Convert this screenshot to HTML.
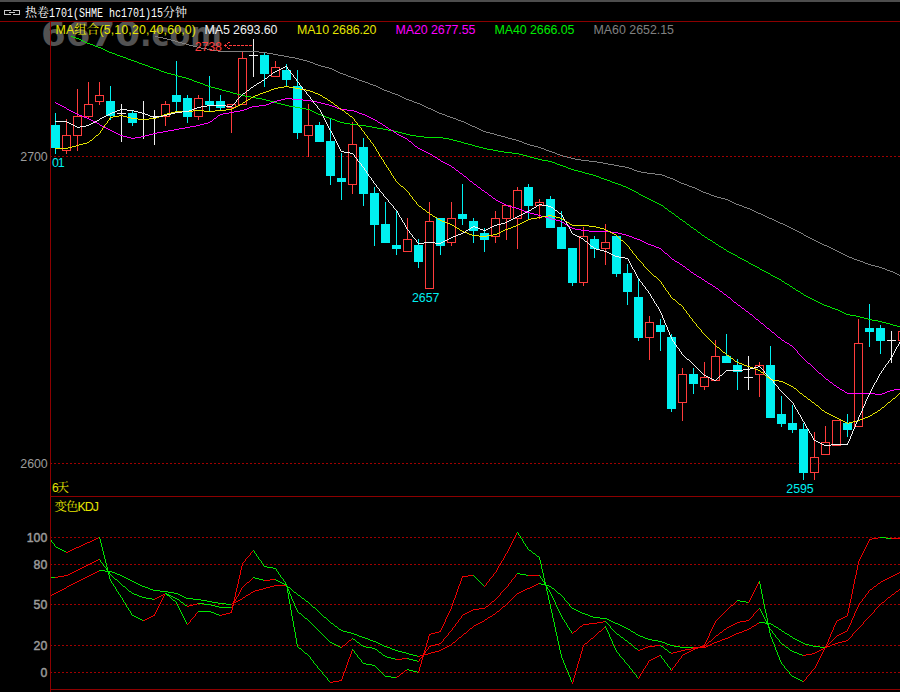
<!DOCTYPE html>
<html><head><meta charset="utf-8"><title>热卷1701</title>
<style>
html,body{margin:0;padding:0;background:#000;}
body{width:900px;height:692px;overflow:hidden;}
svg{display:block;}
text{font-family:'Liberation Sans','Noto Serif CJK SC',sans-serif;}
</style></head><body>
<svg width="900" height="692" viewBox="0 0 900 692">
<rect width="900" height="692" fill="#000"/>

<text y="46.3" font-size="34" font-weight="bold" fill="#525252" style="font-family:'DejaVu Sans','Liberation Sans',sans-serif"><tspan x="41" textLength="99" lengthAdjust="spacingAndGlyphs">6670</tspan><tspan x="140" textLength="82" lengthAdjust="spacingAndGlyphs">.com</tspan></text>
<g shape-rendering="crispEdges">
<rect x="0" y="0" width="900" height="2" fill="#4d4d4d"/>
<line x1="50" y1="156.5" x2="900" y2="156.5" stroke="#a00000" stroke-dasharray="2,2"/>
<line x1="50" y1="463.5" x2="900" y2="463.5" stroke="#a00000" stroke-dasharray="2,2"/>
<line x1="50" y1="537.5" x2="900" y2="537.5" stroke="#a00000" stroke-dasharray="2,2"/>
<line x1="50" y1="564.5" x2="900" y2="564.5" stroke="#a00000" stroke-dasharray="2,2"/>
<line x1="50" y1="604.5" x2="900" y2="604.5" stroke="#a00000" stroke-dasharray="2,2"/>
<line x1="50" y1="645.5" x2="900" y2="645.5" stroke="#a00000" stroke-dasharray="2,2"/>
<line x1="50" y1="672.5" x2="900" y2="672.5" stroke="#a00000" stroke-dasharray="2,2"/>
<rect x="0" y="21" width="900" height="1" fill="#8c0000"/>
<rect x="50" y="21" width="1" height="671" fill="#8c0000"/>
<rect x="50" y="496" width="850" height="1" fill="#8c0000"/>
<rect x="50" y="689" width="850" height="1" fill="#8c0000"/>
<rect x="55" y="113" width="1" height="41" fill="#00f0f0"/>
<rect x="51" y="125" width="9" height="23" fill="#00f0f0"/>
<rect x="66" y="119" width="1" height="17" fill="#ff3c3c"/>
<rect x="66" y="150" width="1" height="4" fill="#ff3c3c"/>
<rect x="62" y="135" width="9" height="1" fill="#ff3c3c"/>
<rect x="62" y="150" width="9" height="1" fill="#ff3c3c"/>
<rect x="62" y="135" width="1" height="16" fill="#ff3c3c"/>
<rect x="70" y="135" width="1" height="16" fill="#ff3c3c"/>
<rect x="77" y="89" width="1" height="28" fill="#ff3c3c"/>
<rect x="77" y="135" width="1" height="16" fill="#ff3c3c"/>
<rect x="73" y="116" width="9" height="1" fill="#ff3c3c"/>
<rect x="73" y="135" width="9" height="1" fill="#ff3c3c"/>
<rect x="73" y="116" width="1" height="20" fill="#ff3c3c"/>
<rect x="81" y="116" width="1" height="20" fill="#ff3c3c"/>
<rect x="88" y="82" width="1" height="23" fill="#ff3c3c"/>
<rect x="88" y="116" width="1" height="3" fill="#ff3c3c"/>
<rect x="84" y="104" width="9" height="1" fill="#ff3c3c"/>
<rect x="84" y="116" width="9" height="1" fill="#ff3c3c"/>
<rect x="84" y="104" width="1" height="13" fill="#ff3c3c"/>
<rect x="92" y="104" width="1" height="13" fill="#ff3c3c"/>
<rect x="99" y="82" width="1" height="14" fill="#ff3c3c"/>
<rect x="99" y="101" width="1" height="4" fill="#ff3c3c"/>
<rect x="95" y="95" width="9" height="1" fill="#ff3c3c"/>
<rect x="95" y="101" width="9" height="1" fill="#ff3c3c"/>
<rect x="95" y="95" width="1" height="7" fill="#ff3c3c"/>
<rect x="103" y="95" width="1" height="7" fill="#ff3c3c"/>
<rect x="110" y="86" width="1" height="34" fill="#00f0f0"/>
<rect x="106" y="101" width="9" height="15" fill="#00f0f0"/>
<rect x="121" y="104" width="1" height="38" fill="#f0f0f0"/>
<rect x="117" y="113" width="9" height="1" fill="#f0f0f0"/>
<rect x="132" y="111" width="1" height="15" fill="#00f0f0"/>
<rect x="128" y="113" width="9" height="10" fill="#00f0f0"/>
<rect x="143" y="101" width="1" height="38" fill="#f0f0f0"/>
<rect x="139" y="119" width="9" height="1" fill="#f0f0f0"/>
<rect x="154" y="110" width="1" height="35" fill="#f0f0f0"/>
<rect x="150" y="116" width="9" height="1" fill="#f0f0f0"/>
<rect x="165" y="101" width="1" height="4" fill="#ff3c3c"/>
<rect x="165" y="116" width="1" height="10" fill="#ff3c3c"/>
<rect x="161" y="104" width="9" height="1" fill="#ff3c3c"/>
<rect x="161" y="116" width="9" height="1" fill="#ff3c3c"/>
<rect x="161" y="104" width="1" height="13" fill="#ff3c3c"/>
<rect x="169" y="104" width="1" height="13" fill="#ff3c3c"/>
<rect x="176" y="61" width="1" height="52" fill="#00f0f0"/>
<rect x="172" y="95" width="9" height="7" fill="#00f0f0"/>
<rect x="187" y="95" width="1" height="28" fill="#00f0f0"/>
<rect x="183" y="98" width="9" height="19" fill="#00f0f0"/>
<rect x="198" y="95" width="1" height="4" fill="#ff3c3c"/>
<rect x="198" y="116" width="1" height="4" fill="#ff3c3c"/>
<rect x="194" y="98" width="9" height="1" fill="#ff3c3c"/>
<rect x="194" y="116" width="9" height="1" fill="#ff3c3c"/>
<rect x="194" y="98" width="1" height="19" fill="#ff3c3c"/>
<rect x="202" y="98" width="1" height="19" fill="#ff3c3c"/>
<rect x="209" y="76" width="1" height="35" fill="#00f0f0"/>
<rect x="205" y="101" width="9" height="4" fill="#00f0f0"/>
<rect x="220" y="95" width="1" height="15" fill="#00f0f0"/>
<rect x="216" y="101" width="9" height="7" fill="#00f0f0"/>
<rect x="231" y="104" width="1" height="1" fill="#ff3c3c"/>
<rect x="231" y="107" width="1" height="26" fill="#ff3c3c"/>
<rect x="227" y="104" width="9" height="1" fill="#ff3c3c"/>
<rect x="227" y="107" width="9" height="1" fill="#ff3c3c"/>
<rect x="227" y="104" width="1" height="4" fill="#ff3c3c"/>
<rect x="235" y="104" width="1" height="4" fill="#ff3c3c"/>
<rect x="242" y="52" width="1" height="7" fill="#ff3c3c"/>
<rect x="242" y="104" width="1" height="1" fill="#ff3c3c"/>
<rect x="238" y="58" width="9" height="1" fill="#ff3c3c"/>
<rect x="238" y="104" width="9" height="1" fill="#ff3c3c"/>
<rect x="238" y="58" width="1" height="47" fill="#ff3c3c"/>
<rect x="246" y="58" width="1" height="47" fill="#ff3c3c"/>
<rect x="253" y="39" width="1" height="38" fill="#f0f0f0"/>
<rect x="249" y="55" width="9" height="1" fill="#f0f0f0"/>
<rect x="264" y="53" width="1" height="34" fill="#00f0f0"/>
<rect x="260" y="55" width="9" height="19" fill="#00f0f0"/>
<rect x="275" y="61" width="1" height="7" fill="#ff3c3c"/>
<rect x="275" y="76" width="1" height="1" fill="#ff3c3c"/>
<rect x="271" y="67" width="9" height="1" fill="#ff3c3c"/>
<rect x="271" y="76" width="9" height="1" fill="#ff3c3c"/>
<rect x="271" y="67" width="1" height="10" fill="#ff3c3c"/>
<rect x="279" y="67" width="1" height="10" fill="#ff3c3c"/>
<rect x="286" y="64" width="1" height="22" fill="#00f0f0"/>
<rect x="282" y="70" width="9" height="10" fill="#00f0f0"/>
<rect x="297" y="70" width="1" height="69" fill="#00f0f0"/>
<rect x="293" y="86" width="9" height="47" fill="#00f0f0"/>
<rect x="308" y="104" width="1" height="22" fill="#ff3c3c"/>
<rect x="308" y="135" width="1" height="22" fill="#ff3c3c"/>
<rect x="304" y="125" width="9" height="1" fill="#ff3c3c"/>
<rect x="304" y="135" width="9" height="1" fill="#ff3c3c"/>
<rect x="304" y="125" width="1" height="11" fill="#ff3c3c"/>
<rect x="312" y="125" width="1" height="11" fill="#ff3c3c"/>
<rect x="319" y="122" width="1" height="20" fill="#00f0f0"/>
<rect x="315" y="125" width="9" height="17" fill="#00f0f0"/>
<rect x="330" y="119" width="1" height="66" fill="#00f0f0"/>
<rect x="326" y="141" width="9" height="35" fill="#00f0f0"/>
<rect x="341" y="153" width="1" height="47" fill="#00f0f0"/>
<rect x="337" y="178" width="9" height="4" fill="#00f0f0"/>
<rect x="352" y="122" width="1" height="23" fill="#ff3c3c"/>
<rect x="352" y="184" width="1" height="10" fill="#ff3c3c"/>
<rect x="348" y="144" width="9" height="1" fill="#ff3c3c"/>
<rect x="348" y="184" width="9" height="1" fill="#ff3c3c"/>
<rect x="348" y="144" width="1" height="41" fill="#ff3c3c"/>
<rect x="356" y="144" width="1" height="41" fill="#ff3c3c"/>
<rect x="363" y="138" width="1" height="68" fill="#00f0f0"/>
<rect x="359" y="147" width="9" height="47" fill="#00f0f0"/>
<rect x="374" y="187" width="1" height="59" fill="#00f0f0"/>
<rect x="370" y="193" width="9" height="32" fill="#00f0f0"/>
<rect x="385" y="202" width="1" height="41" fill="#00f0f0"/>
<rect x="381" y="224" width="9" height="19" fill="#00f0f0"/>
<rect x="396" y="211" width="1" height="44" fill="#00f0f0"/>
<rect x="392" y="245" width="9" height="4" fill="#00f0f0"/>
<rect x="407" y="218" width="1" height="22" fill="#ff3c3c"/>
<rect x="407" y="251" width="1" height="1" fill="#ff3c3c"/>
<rect x="403" y="239" width="9" height="1" fill="#ff3c3c"/>
<rect x="403" y="251" width="9" height="1" fill="#ff3c3c"/>
<rect x="403" y="239" width="1" height="13" fill="#ff3c3c"/>
<rect x="411" y="239" width="1" height="13" fill="#ff3c3c"/>
<rect x="418" y="239" width="1" height="29" fill="#00f0f0"/>
<rect x="414" y="245" width="9" height="17" fill="#00f0f0"/>
<rect x="429" y="202" width="1" height="20" fill="#ff3c3c"/>
<rect x="429" y="288" width="1" height="1" fill="#ff3c3c"/>
<rect x="425" y="221" width="9" height="1" fill="#ff3c3c"/>
<rect x="425" y="288" width="9" height="1" fill="#ff3c3c"/>
<rect x="425" y="221" width="1" height="68" fill="#ff3c3c"/>
<rect x="433" y="221" width="1" height="68" fill="#ff3c3c"/>
<rect x="440" y="218" width="1" height="37" fill="#00f0f0"/>
<rect x="436" y="218" width="9" height="28" fill="#00f0f0"/>
<rect x="451" y="202" width="1" height="17" fill="#ff3c3c"/>
<rect x="451" y="242" width="1" height="4" fill="#ff3c3c"/>
<rect x="447" y="218" width="9" height="1" fill="#ff3c3c"/>
<rect x="447" y="242" width="9" height="1" fill="#ff3c3c"/>
<rect x="447" y="218" width="1" height="25" fill="#ff3c3c"/>
<rect x="455" y="218" width="1" height="25" fill="#ff3c3c"/>
<rect x="462" y="184" width="1" height="41" fill="#00f0f0"/>
<rect x="458" y="214" width="9" height="5" fill="#00f0f0"/>
<rect x="473" y="218" width="1" height="25" fill="#00f0f0"/>
<rect x="469" y="221" width="9" height="10" fill="#00f0f0"/>
<rect x="484" y="228" width="1" height="24" fill="#00f0f0"/>
<rect x="480" y="233" width="9" height="7" fill="#00f0f0"/>
<rect x="495" y="211" width="1" height="8" fill="#ff3c3c"/>
<rect x="495" y="236" width="1" height="7" fill="#ff3c3c"/>
<rect x="491" y="218" width="9" height="1" fill="#ff3c3c"/>
<rect x="491" y="236" width="9" height="1" fill="#ff3c3c"/>
<rect x="491" y="218" width="1" height="19" fill="#ff3c3c"/>
<rect x="499" y="218" width="1" height="19" fill="#ff3c3c"/>
<rect x="506" y="205" width="1" height="1" fill="#ff3c3c"/>
<rect x="506" y="218" width="1" height="22" fill="#ff3c3c"/>
<rect x="502" y="205" width="9" height="1" fill="#ff3c3c"/>
<rect x="502" y="218" width="9" height="1" fill="#ff3c3c"/>
<rect x="502" y="205" width="1" height="14" fill="#ff3c3c"/>
<rect x="510" y="205" width="1" height="14" fill="#ff3c3c"/>
<rect x="517" y="187" width="1" height="4" fill="#ff3c3c"/>
<rect x="517" y="218" width="1" height="31" fill="#ff3c3c"/>
<rect x="513" y="190" width="9" height="1" fill="#ff3c3c"/>
<rect x="513" y="218" width="9" height="1" fill="#ff3c3c"/>
<rect x="513" y="190" width="1" height="29" fill="#ff3c3c"/>
<rect x="521" y="190" width="1" height="29" fill="#ff3c3c"/>
<rect x="528" y="184" width="1" height="35" fill="#00f0f0"/>
<rect x="524" y="187" width="9" height="19" fill="#00f0f0"/>
<rect x="539" y="199" width="1" height="4" fill="#ff3c3c"/>
<rect x="539" y="205" width="1" height="14" fill="#ff3c3c"/>
<rect x="535" y="202" width="9" height="1" fill="#ff3c3c"/>
<rect x="535" y="205" width="9" height="1" fill="#ff3c3c"/>
<rect x="535" y="202" width="1" height="4" fill="#ff3c3c"/>
<rect x="543" y="202" width="1" height="4" fill="#ff3c3c"/>
<rect x="550" y="196" width="1" height="32" fill="#00f0f0"/>
<rect x="546" y="199" width="9" height="29" fill="#00f0f0"/>
<rect x="561" y="211" width="1" height="38" fill="#00f0f0"/>
<rect x="557" y="227" width="9" height="22" fill="#00f0f0"/>
<rect x="572" y="248" width="1" height="38" fill="#00f0f0"/>
<rect x="568" y="248" width="9" height="35" fill="#00f0f0"/>
<rect x="583" y="227" width="1" height="10" fill="#ff3c3c"/>
<rect x="583" y="282" width="1" height="4" fill="#ff3c3c"/>
<rect x="579" y="236" width="9" height="1" fill="#ff3c3c"/>
<rect x="579" y="282" width="9" height="1" fill="#ff3c3c"/>
<rect x="579" y="236" width="1" height="47" fill="#ff3c3c"/>
<rect x="587" y="236" width="1" height="47" fill="#ff3c3c"/>
<rect x="594" y="236" width="1" height="22" fill="#00f0f0"/>
<rect x="590" y="239" width="9" height="10" fill="#00f0f0"/>
<rect x="605" y="224" width="1" height="19" fill="#ff3c3c"/>
<rect x="605" y="248" width="1" height="17" fill="#ff3c3c"/>
<rect x="601" y="242" width="9" height="1" fill="#ff3c3c"/>
<rect x="601" y="248" width="9" height="1" fill="#ff3c3c"/>
<rect x="601" y="242" width="1" height="7" fill="#ff3c3c"/>
<rect x="609" y="242" width="1" height="7" fill="#ff3c3c"/>
<rect x="616" y="236" width="1" height="41" fill="#00f0f0"/>
<rect x="612" y="236" width="9" height="38" fill="#00f0f0"/>
<rect x="627" y="264" width="1" height="41" fill="#00f0f0"/>
<rect x="623" y="273" width="9" height="19" fill="#00f0f0"/>
<rect x="638" y="279" width="1" height="62" fill="#00f0f0"/>
<rect x="634" y="297" width="9" height="41" fill="#00f0f0"/>
<rect x="649" y="316" width="1" height="7" fill="#ff3c3c"/>
<rect x="649" y="337" width="1" height="23" fill="#ff3c3c"/>
<rect x="645" y="322" width="9" height="1" fill="#ff3c3c"/>
<rect x="645" y="337" width="9" height="1" fill="#ff3c3c"/>
<rect x="645" y="322" width="1" height="16" fill="#ff3c3c"/>
<rect x="653" y="322" width="1" height="16" fill="#ff3c3c"/>
<rect x="660" y="319" width="1" height="32" fill="#00f0f0"/>
<rect x="656" y="325" width="9" height="7" fill="#00f0f0"/>
<rect x="671" y="334" width="1" height="78" fill="#00f0f0"/>
<rect x="667" y="337" width="9" height="72" fill="#00f0f0"/>
<rect x="682" y="368" width="1" height="7" fill="#ff3c3c"/>
<rect x="682" y="402" width="1" height="19" fill="#ff3c3c"/>
<rect x="678" y="374" width="9" height="1" fill="#ff3c3c"/>
<rect x="678" y="402" width="9" height="1" fill="#ff3c3c"/>
<rect x="678" y="374" width="1" height="29" fill="#ff3c3c"/>
<rect x="686" y="374" width="1" height="29" fill="#ff3c3c"/>
<rect x="693" y="368" width="1" height="26" fill="#00f0f0"/>
<rect x="689" y="374" width="9" height="10" fill="#00f0f0"/>
<rect x="704" y="362" width="1" height="16" fill="#ff3c3c"/>
<rect x="704" y="386" width="1" height="4" fill="#ff3c3c"/>
<rect x="700" y="377" width="9" height="1" fill="#ff3c3c"/>
<rect x="700" y="386" width="9" height="1" fill="#ff3c3c"/>
<rect x="700" y="377" width="1" height="10" fill="#ff3c3c"/>
<rect x="708" y="377" width="1" height="10" fill="#ff3c3c"/>
<rect x="715" y="340" width="1" height="17" fill="#ff3c3c"/>
<rect x="715" y="380" width="1" height="1" fill="#ff3c3c"/>
<rect x="711" y="356" width="9" height="1" fill="#ff3c3c"/>
<rect x="711" y="380" width="9" height="1" fill="#ff3c3c"/>
<rect x="711" y="356" width="1" height="25" fill="#ff3c3c"/>
<rect x="719" y="356" width="1" height="25" fill="#ff3c3c"/>
<rect x="726" y="334" width="1" height="29" fill="#00f0f0"/>
<rect x="722" y="356" width="9" height="7" fill="#00f0f0"/>
<rect x="737" y="359" width="1" height="31" fill="#00f0f0"/>
<rect x="733" y="365" width="9" height="7" fill="#00f0f0"/>
<rect x="748" y="356" width="1" height="34" fill="#f0f0f0"/>
<rect x="744" y="377" width="9" height="1" fill="#f0f0f0"/>
<rect x="759" y="362" width="1" height="4" fill="#ff3c3c"/>
<rect x="759" y="374" width="1" height="23" fill="#ff3c3c"/>
<rect x="755" y="365" width="9" height="1" fill="#ff3c3c"/>
<rect x="755" y="374" width="9" height="1" fill="#ff3c3c"/>
<rect x="755" y="365" width="1" height="10" fill="#ff3c3c"/>
<rect x="763" y="365" width="1" height="10" fill="#ff3c3c"/>
<rect x="770" y="346" width="1" height="72" fill="#00f0f0"/>
<rect x="766" y="365" width="9" height="53" fill="#00f0f0"/>
<rect x="781" y="396" width="1" height="31" fill="#00f0f0"/>
<rect x="777" y="414" width="9" height="10" fill="#00f0f0"/>
<rect x="792" y="405" width="1" height="28" fill="#00f0f0"/>
<rect x="788" y="423" width="9" height="7" fill="#00f0f0"/>
<rect x="803" y="423" width="1" height="57" fill="#00f0f0"/>
<rect x="799" y="429" width="9" height="44" fill="#00f0f0"/>
<rect x="814" y="432" width="1" height="26" fill="#ff3c3c"/>
<rect x="814" y="472" width="1" height="8" fill="#ff3c3c"/>
<rect x="810" y="457" width="9" height="1" fill="#ff3c3c"/>
<rect x="810" y="472" width="9" height="1" fill="#ff3c3c"/>
<rect x="810" y="457" width="1" height="16" fill="#ff3c3c"/>
<rect x="818" y="457" width="1" height="16" fill="#ff3c3c"/>
<rect x="825" y="426" width="1" height="17" fill="#ff3c3c"/>
<rect x="825" y="454" width="1" height="1" fill="#ff3c3c"/>
<rect x="821" y="442" width="9" height="1" fill="#ff3c3c"/>
<rect x="821" y="454" width="9" height="1" fill="#ff3c3c"/>
<rect x="821" y="442" width="1" height="13" fill="#ff3c3c"/>
<rect x="829" y="442" width="1" height="13" fill="#ff3c3c"/>
<rect x="836" y="420" width="1" height="1" fill="#ff3c3c"/>
<rect x="836" y="445" width="1" height="1" fill="#ff3c3c"/>
<rect x="832" y="420" width="9" height="1" fill="#ff3c3c"/>
<rect x="832" y="445" width="9" height="1" fill="#ff3c3c"/>
<rect x="832" y="420" width="1" height="26" fill="#ff3c3c"/>
<rect x="840" y="420" width="1" height="26" fill="#ff3c3c"/>
<rect x="847" y="414" width="1" height="23" fill="#00f0f0"/>
<rect x="843" y="423" width="9" height="7" fill="#00f0f0"/>
<rect x="858" y="319" width="1" height="25" fill="#ff3c3c"/>
<rect x="858" y="426" width="1" height="1" fill="#ff3c3c"/>
<rect x="854" y="343" width="9" height="1" fill="#ff3c3c"/>
<rect x="854" y="426" width="9" height="1" fill="#ff3c3c"/>
<rect x="854" y="343" width="1" height="84" fill="#ff3c3c"/>
<rect x="862" y="343" width="1" height="84" fill="#ff3c3c"/>
<rect x="869" y="304" width="1" height="43" fill="#00f0f0"/>
<rect x="865" y="328" width="9" height="4" fill="#00f0f0"/>
<rect x="880" y="325" width="1" height="29" fill="#00f0f0"/>
<rect x="876" y="328" width="9" height="13" fill="#00f0f0"/>
<rect x="891" y="331" width="1" height="32" fill="#f0f0f0"/>
<rect x="887" y="340" width="9" height="1" fill="#f0f0f0"/>
<rect x="902" y="331" width="1" height="1" fill="#ff3c3c"/>
<rect x="902" y="340" width="1" height="1" fill="#ff3c3c"/>
<rect x="898" y="331" width="9" height="1" fill="#ff3c3c"/>
<rect x="898" y="340" width="9" height="1" fill="#ff3c3c"/>
<rect x="898" y="331" width="1" height="10" fill="#ff3c3c"/>
<rect x="906" y="331" width="1" height="10" fill="#ff3c3c"/>
</g>
<defs><clipPath id="cm"><rect x="51" y="36" width="849" height="460"/></clipPath><clipPath id="ck"><rect x="51" y="497" width="849" height="193"/></clipPath></defs>
<g clip-path="url(#cm)" shape-rendering="crispEdges">
<path d="M155 36.5h3M158 37.5h5M163 38.5h4M167 39.5h4M171 40.5h4M175 41.5h3M178 42.5h4M182 43.5h4M186 44.5h3M189 45.5h4M193 46.5h4M197 47.5h4M201 48.5h6M207 49.5h5M212 50.5h6M218 51.5h41M259 52.5h8M267 53.5h6M273 54.5h5M278 55.5h6M284 56.5h5M289 57.5h6M295 58.5h4M299 59.5h4M303 60.5h4M307 61.5h3M310 62.5h3M313 63.5h2M315 64.5h3M318 65.5h3M321 66.5h4M325 67.5h4M329 68.5h3M332 69.5h2M334 70.5h2M336 71.5h2M338 72.5h2M340 73.5h3M343 74.5h3M346 75.5h2M348 76.5h3M351 77.5h3M354 78.5h3M357 79.5h2M359 80.5h3M362 81.5h3M365 82.5h3M368 83.5h2M370 84.5h3M373 85.5h3M376 86.5h2M378 87.5h2M380 88.5h2M382 89.5h2M384 90.5h3M387 91.5h3M390 92.5h2M392 93.5h3M395 94.5h3M398 95.5h2M400 96.5h2M402 97.5h2M404 98.5h2M406 99.5h3M409 100.5h3M412 101.5h2M414 102.5h3M417 103.5h3M420 104.5h2M422 105.5h2M424 106.5h2M426 107.5h2M428 108.5h3M431 109.5h2M433 110.5h2M435 111.5h2M437 112.5h2M439 113.5h3M442 114.5h3M445 115.5h2M447 116.5h3M450 117.5h3M453 118.5h3M456 119.5h2M458 120.5h3M461 121.5h3M464 122.5h2M466 123.5h2M468 124.5h2M470 125.5h2M472 126.5h3M475 127.5h2M477 128.5h2M479 129.5h2M481 130.5h2M483 131.5h3M486 132.5h4M490 133.5h4M494 134.5h3M497 135.5h4M501 136.5h4M505 137.5h3M508 138.5h4M512 139.5h4M516 140.5h3M519 141.5h3M522 142.5h2M524 143.5h3M527 144.5h3M530 145.5h4M534 146.5h4M538 147.5h3M541 148.5h3M544 149.5h2M546 150.5h3M549 151.5h3M552 152.5h3M555 153.5h2M557 154.5h3M560 155.5h3M563 156.5h4M567 157.5h4M571 158.5h4M575 159.5h6M581 160.5h8M589 161.5h8M597 162.5h6M603 163.5h5M608 164.5h6M614 165.5h5M619 166.5h6M625 167.5h4M629 168.5h3M632 169.5h2M634 170.5h3M637 171.5h4M641 172.5h6M647 173.5h8M655 174.5h7M662 175.5h3M665 176.5h2M667 177.5h3M670 178.5h3M673 179.5h2M675 180.5h2M677 181.5h2M679 182.5h2M681 183.5h3M684 184.5h3M687 185.5h2M689 186.5h3M692 187.5h3M695 188.5h2M697 189.5h2M699 190.5h2M701 191.5h2M703 192.5h3M706 193.5h3M709 194.5h2M711 195.5h3M714 196.5h3M717 197.5h4M721 198.5h4M725 199.5h3M728 200.5h2M730 201.5h2M732 202.5h2M734 203.5h2M736 204.5h3M739 205.5h3M742 206.5h2M744 207.5h3M747 208.5h3M750 209.5h2M752 210.5h2M754 211.5h2M756 212.5h2M758 213.5h3M761 214.5h2M763 215.5h2M765 216.5h2M767 217.5h2M769 218.5h3M772 219.5h2M774 220.5h2M776 221.5h2M778 222.5h2M780 223.5h3M783 224.5h2M785 225.5h2M787 226.5h2M789 227.5h2M791 228.5h2M793 229.5h2M795 230.5h2M797 231.5h2M799 232.5h2M801 233.5h2M803 234.5h1M804 235.5h2M806 236.5h2M808 237.5h2M810 238.5h2M812 239.5h2M814 240.5h2M816 241.5h2M818 242.5h2M820 243.5h2M822 244.5h2M824 245.5h3M827 246.5h2M829 247.5h2M831 248.5h2M833 249.5h2M835 250.5h2M837 251.5h2M839 252.5h2M841 253.5h2M843 254.5h2M845 255.5h2M847 256.5h2M849 257.5h3M852 258.5h2M854 259.5h3M857 260.5h3M860 261.5h3M863 262.5h2M865 263.5h3M868 264.5h3M871 265.5h4M875 266.5h4M879 267.5h3M882 268.5h3M885 269.5h2M887 270.5h3M890 271.5h3M893 272.5h2M895 273.5h2M897 274.5h2M899 275.5h1" stroke="#808080" stroke-width="1" fill="none"/>
<path d="M71 36.5h2M73 37.5h3M76 38.5h3M79 39.5h2M81 40.5h2M83 41.5h2M85 42.5h2M87 43.5h3M90 44.5h3M93 45.5h2M95 46.5h3M98 47.5h3M101 48.5h2M103 49.5h2M105 50.5h2M107 51.5h2M109 52.5h3M112 53.5h3M115 54.5h2M117 55.5h3M120 56.5h3M123 57.5h3M126 58.5h2M128 59.5h3M131 60.5h3M134 61.5h3M137 62.5h2M139 63.5h3M142 64.5h3M145 65.5h3M148 66.5h2M150 67.5h3M153 68.5h3M156 69.5h3M159 70.5h2M161 71.5h3M164 72.5h3M167 73.5h4M171 74.5h4M175 75.5h3M178 76.5h4M182 77.5h4M186 78.5h3M189 79.5h3M192 80.5h2M194 81.5h3M197 82.5h3M200 83.5h3M203 84.5h2M205 85.5h3M208 86.5h3M211 87.5h4M215 88.5h4M219 89.5h3M222 90.5h4M226 91.5h4M230 92.5h3M233 93.5h4M237 94.5h4M241 95.5h4M245 96.5h6M251 97.5h5M256 98.5h6M262 99.5h4M266 100.5h4M270 101.5h4M274 102.5h3M277 103.5h4M281 104.5h4M285 105.5h4M289 106.5h6M295 107.5h5M300 108.5h6M306 109.5h4M310 110.5h2M312 111.5h2M314 112.5h2M316 113.5h2M318 114.5h3M321 115.5h3M324 116.5h2M326 117.5h3M329 118.5h3M332 119.5h3M335 120.5h2M337 121.5h3M340 122.5h4M344 123.5h6M350 124.5h8M358 125.5h8M366 126.5h6M372 127.5h5M377 128.5h6M383 129.5h5M388 130.5h6M394 131.5h4M398 132.5h4M402 133.5h4M406 134.5h4M410 135.5h6M416 136.5h8M424 137.5h19M443 138.5h6M449 139.5h4M453 140.5h4M457 141.5h4M461 142.5h3M464 143.5h4M468 144.5h4M472 145.5h3M475 146.5h4M479 147.5h4M483 148.5h4M487 149.5h6M493 150.5h5M498 151.5h6M504 152.5h8M512 153.5h7M519 154.5h4M523 155.5h4M527 156.5h3M530 157.5h4M534 158.5h4M538 159.5h4M542 160.5h6M548 161.5h4M552 162.5h3M555 163.5h2M557 164.5h3M560 165.5h3M563 166.5h3M566 167.5h2M568 168.5h3M571 169.5h3M574 170.5h4M578 171.5h4M582 172.5h3M585 173.5h4M589 174.5h4M593 175.5h3M596 176.5h3M599 177.5h2M601 178.5h3M604 179.5h3M607 180.5h3M610 181.5h2M612 182.5h3M615 183.5h3M618 184.5h3M621 185.5h2M623 186.5h3M626 187.5h2M628 188.5h2M630 189.5h2M632 190.5h2M634 191.5h2M636 192.5h2M638 193.5h1M639 194.5h2M641 195.5h2M643 196.5h2M645 197.5h2M647 198.5h2M649 199.5h2M651 200.5h2M653 201.5h2M655 202.5h2M657 203.5h2M659 204.5h2M661 205.5h2M663 206.5h1M664 207.5h1M665 208.5h2M667 209.5h1M668 210.5h1M669 211.5h2M671 212.5h1M672 213.5h2M674 214.5h1M675 215.5h1M676 216.5h2M678 217.5h1M679 218.5h1M680 219.5h2M682 220.5h1M683 221.5h2M685 222.5h1M686 223.5h1M687 224.5h2M689 225.5h1M690 226.5h1M691 227.5h2M693 228.5h1M694 229.5h2M696 230.5h1M697 231.5h1M698 232.5h2M700 233.5h1M701 234.5h1M702 235.5h2M704 236.5h1M705 237.5h2M707 238.5h1M708 239.5h2M710 240.5h2M712 241.5h1M713 242.5h2M715 243.5h1M716 244.5h2M718 245.5h1M719 246.5h2M721 247.5h2M723 248.5h1M724 249.5h2M726 250.5h1M727 251.5h2M729 252.5h2M731 253.5h2M733 254.5h2M735 255.5h2M737 256.5h1M738 257.5h2M740 258.5h2M742 259.5h2M744 260.5h2M746 261.5h2M748 262.5h1M749 263.5h2M751 264.5h2M753 265.5h2M755 266.5h2M757 267.5h2M759 268.5h1M760 269.5h2M762 270.5h2M764 271.5h2M766 272.5h2M768 273.5h2M770 274.5h1M771 275.5h2M773 276.5h2M775 277.5h2M777 278.5h2M779 279.5h2M781 280.5h1M782 281.5h2M784 282.5h1M785 283.5h2M787 284.5h2M789 285.5h1M790 286.5h2M792 287.5h1M793 288.5h2M795 289.5h1M796 290.5h2M798 291.5h2M800 292.5h1M801 293.5h2M803 294.5h1M804 295.5h2M806 296.5h2M808 297.5h2M810 298.5h2M812 299.5h2M814 300.5h2M816 301.5h2M818 302.5h2M820 303.5h2M822 304.5h2M824 305.5h3M827 306.5h3M830 307.5h2M832 308.5h3M835 309.5h3M838 310.5h2M840 311.5h2M842 312.5h2M844 313.5h2M846 314.5h4M850 315.5h6M856 316.5h4M860 317.5h4M864 318.5h4M868 319.5h4M872 320.5h6M878 321.5h4M882 322.5h4M886 323.5h4M890 324.5h3M893 325.5h4M897 326.5h3" stroke="#00e600" stroke-width="1" fill="none"/>
<path d="M285 98.5h7M281 99.5h4M292 99.5h11M277 100.5h4M303 100.5h8M274 101.5h3M311 101.5h6M55 102.5h1M271 102.5h3M317 102.5h4M56 103.5h2M269 103.5h2M321 103.5h4M58 104.5h2M266 104.5h3M325 104.5h4M60 105.5h2M259 105.5h7M329 105.5h3M62 106.5h2M252 106.5h7M332 106.5h3M64 107.5h2M249 107.5h3M335 107.5h2M66 108.5h1M247 108.5h2M337 108.5h3M67 109.5h2M244 109.5h3M340 109.5h7M69 110.5h2M240 110.5h4M347 110.5h7M71 111.5h2M234 111.5h6M354 111.5h3M73 112.5h2M229 112.5h5M357 112.5h2M75 113.5h2M223 113.5h6M359 113.5h3M77 114.5h2M220 114.5h3M362 114.5h3M79 115.5h3M218 115.5h2M365 115.5h2M82 116.5h2M217 116.5h1M367 116.5h2M84 117.5h3M216 117.5h1M369 117.5h2M87 118.5h2M214 118.5h2M371 118.5h2M89 119.5h2M213 119.5h1M373 119.5h2M91 120.5h2M212 120.5h1M375 120.5h2M93 121.5h2M210 121.5h2M377 121.5h1M95 122.5h2M208 122.5h2M378 122.5h2M97 123.5h2M204 123.5h4M380 123.5h2M99 124.5h1M200 124.5h4M382 124.5h1M100 125.5h2M196 125.5h4M383 125.5h2M102 126.5h2M190 126.5h6M385 126.5h1M104 127.5h2M185 127.5h5M386 127.5h2M106 128.5h2M179 128.5h6M388 128.5h1M108 129.5h2M174 129.5h5M389 129.5h2M110 130.5h2M168 130.5h6M391 130.5h2M112 131.5h2M163 131.5h5M393 131.5h1M114 132.5h2M157 132.5h6M394 132.5h2M116 133.5h2M153 133.5h4M396 133.5h1M118 134.5h2M149 134.5h4M397 134.5h2M120 135.5h3M145 135.5h4M399 135.5h2M123 136.5h4M141 136.5h4M401 136.5h2M127 137.5h4M135 137.5h6M403 137.5h2M131 138.5h4M405 138.5h2M407 139.5h1M408 140.5h1M409 141.5h2M411 142.5h1M412 143.5h1M413 144.5h1M414 145.5h1M415 146.5h2M417 147.5h1M418 148.5h2M420 149.5h2M422 150.5h2M424 151.5h2M426 152.5h2M428 153.5h2M430 154.5h2M432 155.5h1M433 156.5h2M435 157.5h2M437 158.5h1M438 159.5h2M440 160.5h1M441 161.5h2M443 162.5h2M445 163.5h2M447 164.5h2M449 165.5h2M451 166.5h1M452 167.5h2M454 168.5h1M455 169.5h1M456 170.5h2M458 171.5h1M459 172.5h1M460 173.5h2M462 174.5h1M463 175.5h1M464 176.5h2M466 177.5h1M467 178.5h1M468 179.5h1M469 180.5h1M470 181.5h2M472 182.5h1M473 183.5h1M474 184.5h2M476 185.5h1M477 186.5h1M478 187.5h2M480 188.5h1M481 189.5h1M482 190.5h2M484 191.5h1M485 192.5h2M487 193.5h1M488 194.5h1M489 195.5h2M491 196.5h1M492 197.5h1M493 198.5h2M495 199.5h1M496 200.5h2M498 201.5h2M500 202.5h2M502 203.5h2M504 204.5h2M506 205.5h2M508 206.5h4M512 207.5h4M516 208.5h3M519 209.5h3M522 210.5h2M524 211.5h3M527 212.5h3M530 213.5h4M534 214.5h4M538 215.5h3M541 216.5h4M545 217.5h4M549 218.5h3M552 219.5h4M556 220.5h4M560 221.5h2M562 222.5h2M564 223.5h1M565 224.5h2M567 225.5h2M569 226.5h1M570 227.5h2M572 228.5h3M575 229.5h6M581 230.5h8M589 231.5h22M611 232.5h7M618 233.5h4M622 234.5h4M626 235.5h3M629 236.5h3M632 237.5h2M634 238.5h3M637 239.5h3M640 240.5h2M642 241.5h2M644 242.5h2M646 243.5h2M648 244.5h3M651 245.5h3M654 246.5h2M656 247.5h3M659 248.5h2M661 249.5h1M662 250.5h1M663 251.5h1M664 252.5h1M665 253.5h2M667 254.5h1M668 255.5h1M669 256.5h1M670 257.5h1M671 258.5h1M672 259.5h2M674 260.5h1M675 261.5h2M677 262.5h2M679 263.5h1M680 264.5h2M682 265.5h1M683 266.5h2M685 267.5h1M686 268.5h1M687 269.5h2M689 270.5h1M690 271.5h1M691 272.5h2M693 273.5h1M694 274.5h2M696 275.5h1M697 276.5h2M699 277.5h2M701 278.5h1M702 279.5h2M704 280.5h1M705 281.5h2M707 282.5h1M708 283.5h2M710 284.5h2M712 285.5h1M713 286.5h2M715 287.5h1M716 288.5h2M718 289.5h1M719 290.5h1M720 291.5h2M722 292.5h1M723 293.5h1M724 294.5h2M726 295.5h1M727 296.5h1M728 297.5h2M730 298.5h1M731 299.5h1M732 300.5h1M733 301.5h1M734 302.5h2M736 303.5h1M737 304.5h1M738 305.5h2M740 306.5h1M741 307.5h1M742 308.5h2M744 309.5h1M745 310.5h1M746 311.5h2M748 312.5h1M749 313.5h1M750 314.5h2M752 315.5h1M753 316.5h1M754 317.5h1M755 318.5h1M756 319.5h2M758 320.5h1M759 321.5h1M760 322.5h1M761 323.5h2M763 324.5h1M764 325.5h1M765 326.5h1M766 327.5h1M767 328.5h2M769 329.5h1M770 330.5h1M771 331.5h1M772 332.5h2M774 333.5h1M775 334.5h1M776 335.5h1M777 336.5h1M778 337.5h2M780 338.5h1M781 339.5h1M782 340.5h2M784 341.5h1M785 342.5h2M787 343.5h2M789 344.5h1M790 345.5h2M792 346.5h1M793 347.5h1M794 348.5h1M795 349.5h1M796 350.5h1M797 351.5h1M797 352.5h1M798 353.5h1M799 354.5h1M800 355.5h1M801 356.5h1M802 357.5h1M803 358.5h1M804 359.5h1M805 360.5h1M806 361.5h1M807 362.5h1M808 363.5h2M810 364.5h1M811 365.5h1M812 366.5h1M813 367.5h1M814 368.5h1M815 369.5h1M816 370.5h1M817 371.5h1M818 372.5h1M819 373.5h2M821 374.5h1M822 375.5h1M823 376.5h1M824 377.5h1M825 378.5h1M826 379.5h2M828 380.5h1M829 381.5h1M830 382.5h2M832 383.5h1M833 384.5h1M834 385.5h2M836 386.5h1M837 387.5h2M839 388.5h1M840 389.5h2M894 389.5h6M842 390.5h2M890 390.5h4M844 391.5h1M887 391.5h3M845 392.5h2M885 392.5h2M847 393.5h28M882 393.5h3M875 394.5h7" stroke="#ff00ff" stroke-width="1" fill="none"/>
<path d="M284 86.5h5M278 87.5h6M289 87.5h6M274 88.5h4M295 88.5h5M271 89.5h3M300 89.5h6M269 90.5h2M306 90.5h4M266 91.5h3M310 91.5h3M263 92.5h3M313 92.5h2M260 93.5h3M315 93.5h3M258 94.5h2M318 94.5h2M255 95.5h3M320 95.5h2M253 96.5h2M322 96.5h1M251 97.5h2M323 97.5h2M250 98.5h1M325 98.5h2M248 99.5h2M327 99.5h1M246 100.5h2M328 100.5h2M245 101.5h1M330 101.5h1M243 102.5h2M331 102.5h2M242 103.5h1M333 103.5h1M240 104.5h2M334 104.5h1M238 105.5h2M335 105.5h2M236 106.5h2M337 106.5h1M234 107.5h2M338 107.5h1M232 108.5h2M339 108.5h2M226 109.5h6M341 109.5h1M193 110.5h11M215 110.5h11M342 110.5h2M175 111.5h18M204 111.5h11M344 111.5h1M171 112.5h4M345 112.5h1M167 113.5h4M346 113.5h2M164 114.5h3M348 114.5h1M119 115.5h4M161 115.5h3M349 115.5h1M113 116.5h6M123 116.5h4M159 116.5h2M350 116.5h2M110 117.5h3M127 117.5h4M156 117.5h3M352 117.5h1M109 118.5h1M131 118.5h7M149 118.5h7M353 118.5h1M109 119.5h1M138 119.5h11M354 119.5h1M108 120.5h1M354 120.5h1M107 121.5h1M355 121.5h1M107 122.5h1M356 122.5h1M106 123.5h1M357 123.5h1M105 124.5h1M357 124.5h1M104 125.5h1M358 125.5h1M104 126.5h1M359 126.5h1M103 127.5h1M360 127.5h1M102 128.5h1M361 128.5h1M102 129.5h1M361 129.5h1M101 130.5h1M362 130.5h1M100 131.5h1M363 131.5h1M100 132.5h1M364 132.5h1M99 133.5h1M364 133.5h1M98 134.5h1M365 134.5h1M96 135.5h2M366 135.5h1M95 136.5h1M367 136.5h1M94 137.5h1M367 137.5h1M93 138.5h1M368 138.5h1M92 139.5h1M369 139.5h1M90 140.5h2M370 140.5h1M89 141.5h1M370 141.5h1M87 142.5h2M371 142.5h1M83 143.5h4M372 143.5h1M79 144.5h4M373 144.5h1M76 145.5h3M373 145.5h1M72 146.5h4M374 146.5h1M68 147.5h4M375 147.5h1M55 148.5h13M375 148.5h1M376 149.5h1M376 150.5h1M377 151.5h1M378 152.5h1M378 153.5h1M379 154.5h1M379 155.5h1M380 156.5h1M381 157.5h1M381 158.5h1M382 159.5h1M383 160.5h1M383 161.5h1M384 162.5h1M384 163.5h1M385 164.5h1M386 165.5h1M386 166.5h1M387 167.5h1M388 168.5h1M388 169.5h1M389 170.5h1M390 171.5h1M390 172.5h1M391 173.5h1M391 174.5h1M392 175.5h1M393 176.5h1M393 177.5h1M394 178.5h1M395 179.5h1M395 180.5h1M396 181.5h1M397 182.5h1M398 183.5h1M399 184.5h1M400 185.5h1M401 186.5h2M403 187.5h1M404 188.5h1M405 189.5h1M406 190.5h1M407 191.5h1M408 192.5h1M409 193.5h1M409 194.5h1M410 195.5h1M411 196.5h1M412 197.5h1M412 198.5h1M413 199.5h1M414 200.5h1M415 201.5h1M416 202.5h1M416 203.5h1M417 204.5h1M418 205.5h1M419 206.5h2M421 207.5h1M422 208.5h1M423 209.5h2M425 210.5h1M426 211.5h1M427 212.5h2M429 213.5h1M430 214.5h2M432 215.5h1M548 215.5h4M433 216.5h2M542 216.5h6M552 216.5h4M435 217.5h2M537 217.5h5M556 217.5h4M437 218.5h1M531 218.5h6M560 218.5h2M438 219.5h2M528 219.5h3M562 219.5h2M440 220.5h2M526 220.5h2M564 220.5h1M442 221.5h3M524 221.5h2M565 221.5h2M445 222.5h2M522 222.5h2M567 222.5h2M447 223.5h3M520 223.5h2M569 223.5h1M450 224.5h2M518 224.5h2M570 224.5h2M452 225.5h2M516 225.5h2M572 225.5h17M454 226.5h1M513 226.5h3M589 226.5h7M455 227.5h2M511 227.5h2M596 227.5h4M457 228.5h2M508 228.5h3M600 228.5h4M459 229.5h1M505 229.5h3M604 229.5h2M460 230.5h2M503 230.5h2M606 230.5h2M462 231.5h2M501 231.5h2M608 231.5h2M464 232.5h3M499 232.5h2M610 232.5h2M467 233.5h2M497 233.5h2M612 233.5h2M469 234.5h3M493 234.5h4M614 234.5h2M472 235.5h7M487 235.5h6M616 235.5h1M479 236.5h8M617 236.5h1M618 237.5h1M619 238.5h1M620 239.5h1M621 240.5h2M623 241.5h1M624 242.5h1M625 243.5h1M626 244.5h1M627 245.5h1M628 246.5h1M629 247.5h1M629 248.5h1M630 249.5h1M631 250.5h1M632 251.5h1M632 252.5h1M633 253.5h1M634 254.5h1M635 255.5h1M636 256.5h1M636 257.5h1M637 258.5h1M638 259.5h1M639 260.5h1M640 261.5h1M641 262.5h1M642 263.5h1M643 264.5h1M643 265.5h1M644 266.5h1M645 267.5h1M646 268.5h1M647 269.5h1M648 270.5h1M649 271.5h1M650 272.5h1M651 273.5h1M652 274.5h1M653 275.5h1M654 276.5h2M656 277.5h1M657 278.5h1M658 279.5h1M659 280.5h1M660 281.5h1M661 282.5h1M661 283.5h1M662 284.5h1M663 285.5h1M663 286.5h1M664 287.5h1M665 288.5h1M665 289.5h1M666 290.5h1M667 291.5h1M668 292.5h1M668 293.5h1M669 294.5h1M670 295.5h1M670 296.5h1M671 297.5h1M672 298.5h1M673 299.5h2M675 300.5h1M676 301.5h1M677 302.5h1M678 303.5h1M679 304.5h2M681 305.5h1M682 306.5h1M683 307.5h1M683 308.5h1M684 309.5h1M685 310.5h1M686 311.5h1M686 312.5h1M687 313.5h1M688 314.5h1M689 315.5h1M689 316.5h1M690 317.5h1M691 318.5h1M692 319.5h1M692 320.5h1M693 321.5h1M694 322.5h1M695 323.5h1M696 324.5h1M696 325.5h1M697 326.5h1M698 327.5h1M699 328.5h1M700 329.5h1M701 330.5h1M701 331.5h1M702 332.5h1M703 333.5h1M704 334.5h1M705 335.5h1M706 336.5h1M707 337.5h1M708 338.5h1M709 339.5h1M710 340.5h1M711 341.5h1M712 342.5h1M713 343.5h1M714 344.5h1M715 345.5h1M716 346.5h1M717 347.5h2M719 348.5h1M720 349.5h1M721 350.5h1M722 351.5h1M723 352.5h2M725 353.5h1M726 354.5h1M727 355.5h2M729 356.5h1M730 357.5h1M731 358.5h2M733 359.5h1M734 360.5h1M735 361.5h2M737 362.5h2M739 363.5h3M742 364.5h2M744 365.5h3M747 366.5h3M750 367.5h3M753 368.5h2M755 369.5h3M758 370.5h2M760 371.5h1M761 372.5h2M763 373.5h1M764 374.5h1M765 375.5h1M766 376.5h1M767 377.5h2M769 378.5h1M770 379.5h3M773 380.5h6M779 381.5h4M783 382.5h2M785 383.5h2M787 384.5h2M789 385.5h2M791 386.5h2M793 387.5h1M794 388.5h2M796 389.5h1M797 390.5h1M798 391.5h1M799 392.5h1M800 393.5h2M899 393.5h1M802 394.5h1M898 394.5h1M803 395.5h1M897 395.5h1M804 396.5h2M896 396.5h1M806 397.5h1M895 397.5h1M807 398.5h1M893 398.5h2M808 399.5h2M892 399.5h1M810 400.5h1M891 400.5h1M811 401.5h1M890 401.5h1M812 402.5h2M888 402.5h2M814 403.5h1M887 403.5h1M815 404.5h1M886 404.5h1M816 405.5h2M885 405.5h1M818 406.5h1M884 406.5h1M819 407.5h1M882 407.5h2M820 408.5h1M881 408.5h1M821 409.5h1M880 409.5h1M822 410.5h2M878 410.5h2M824 411.5h1M877 411.5h1M825 412.5h2M875 412.5h2M827 413.5h2M873 413.5h2M829 414.5h2M872 414.5h1M831 415.5h2M870 415.5h2M833 416.5h2M868 416.5h2M835 417.5h2M865 417.5h3M837 418.5h2M863 418.5h2M839 419.5h2M860 419.5h3M841 420.5h2M857 420.5h3M843 421.5h2M853 421.5h4M845 422.5h2M849 422.5h4M847 423.5h2" stroke="#e6e600" stroke-width="1" fill="none"/>
<path d="M285 66.5h2M283 67.5h2M287 67.5h1M281 68.5h2M287 68.5h1M279 69.5h2M288 69.5h1M277 70.5h2M289 70.5h1M275 71.5h2M290 71.5h1M273 72.5h2M290 72.5h1M272 73.5h1M291 73.5h1M271 74.5h1M292 74.5h1M269 75.5h2M293 75.5h1M268 76.5h1M293 76.5h1M267 77.5h1M294 77.5h1M265 78.5h2M295 78.5h1M264 79.5h1M296 79.5h1M262 80.5h2M296 80.5h1M261 81.5h1M297 81.5h1M259 82.5h2M298 82.5h1M257 83.5h2M299 83.5h1M256 84.5h1M299 84.5h1M254 85.5h2M300 85.5h1M253 86.5h1M301 86.5h1M251 87.5h2M302 87.5h1M250 88.5h1M302 88.5h1M249 89.5h1M303 89.5h1M247 90.5h2M304 90.5h1M246 91.5h1M305 91.5h1M245 92.5h1M306 92.5h1M243 93.5h2M306 93.5h1M242 94.5h1M307 94.5h1M241 95.5h1M308 95.5h1M240 96.5h1M309 96.5h1M239 97.5h1M310 97.5h1M238 98.5h1M310 98.5h1M237 99.5h1M311 99.5h1M236 100.5h1M312 100.5h1M236 101.5h1M313 101.5h1M235 102.5h1M313 102.5h1M234 103.5h1M314 103.5h1M233 104.5h1M315 104.5h1M207 105.5h19M232 105.5h1M316 105.5h1M201 106.5h6M226 106.5h6M317 106.5h1M197 107.5h4M317 107.5h1M194 108.5h3M318 108.5h1M120 109.5h7M192 109.5h2M319 109.5h1M117 110.5h3M127 110.5h7M189 110.5h3M320 110.5h1M115 111.5h2M134 111.5h4M182 111.5h7M320 111.5h1M112 112.5h3M138 112.5h4M175 112.5h7M321 112.5h1M110 113.5h2M142 113.5h3M171 113.5h4M321 113.5h1M108 114.5h2M145 114.5h3M167 114.5h4M322 114.5h1M106 115.5h2M148 115.5h2M163 115.5h4M322 115.5h1M104 116.5h2M150 116.5h3M157 116.5h6M323 116.5h1M102 117.5h2M153 117.5h4M323 117.5h1M100 118.5h2M324 118.5h1M99 119.5h1M324 119.5h1M97 120.5h2M325 120.5h1M55 121.5h12M95 121.5h2M325 121.5h1M67 122.5h2M93 122.5h2M326 122.5h1M69 123.5h2M91 123.5h2M326 123.5h1M71 124.5h2M89 124.5h2M327 124.5h1M73 125.5h2M86 125.5h3M327 125.5h1M75 126.5h2M80 126.5h6M328 126.5h1M77 127.5h3M328 127.5h1M329 128.5h1M329 129.5h1M330 130.5h1M331 131.5h1M331 132.5h1M332 133.5h1M332 134.5h1M333 135.5h1M333 136.5h1M334 137.5h1M334 138.5h1M335 139.5h1M335 140.5h1M336 141.5h1M336 142.5h1M337 143.5h1M337 144.5h1M338 145.5h1M338 146.5h1M339 147.5h1M339 148.5h1M340 149.5h1M340 150.5h1M341 151.5h3M344 152.5h6M350 153.5h3M353 154.5h1M354 155.5h1M354 156.5h1M355 157.5h1M356 158.5h1M357 159.5h1M357 160.5h1M358 161.5h1M359 162.5h1M360 163.5h1M361 164.5h1M361 165.5h1M362 166.5h1M363 167.5h1M364 168.5h1M364 169.5h1M365 170.5h1M366 171.5h1M366 172.5h1M367 173.5h1M368 174.5h1M368 175.5h1M369 176.5h1M370 177.5h1M371 178.5h1M371 179.5h1M372 180.5h1M373 181.5h1M373 182.5h1M374 183.5h1M375 184.5h1M376 185.5h1M376 186.5h1M377 187.5h1M378 188.5h1M379 189.5h1M379 190.5h1M380 191.5h1M381 192.5h1M382 193.5h1M383 194.5h1M383 195.5h1M384 196.5h1M385 197.5h1M386 198.5h1M387 199.5h1M388 200.5h1M388 201.5h1M389 202.5h1M390 203.5h1M391 204.5h1M539 204.5h3M392 205.5h1M537 205.5h2M542 205.5h6M393 206.5h1M536 206.5h1M548 206.5h3M393 207.5h1M534 207.5h2M551 207.5h2M394 208.5h1M532 208.5h2M553 208.5h1M395 209.5h1M531 209.5h1M554 209.5h1M396 210.5h1M529 210.5h2M555 210.5h2M397 211.5h1M527 211.5h2M557 211.5h1M397 212.5h1M525 212.5h2M558 212.5h1M398 213.5h1M523 213.5h2M559 213.5h2M398 214.5h1M521 214.5h2M561 214.5h1M399 215.5h1M519 215.5h2M562 215.5h1M399 216.5h1M517 216.5h2M562 216.5h1M400 217.5h1M515 217.5h2M563 217.5h1M401 218.5h1M513 218.5h2M563 218.5h1M401 219.5h1M511 219.5h2M564 219.5h1M402 220.5h1M509 220.5h2M564 220.5h1M402 221.5h1M507 221.5h2M565 221.5h1M403 222.5h1M505 222.5h2M566 222.5h1M404 223.5h1M501 223.5h4M566 223.5h1M404 224.5h1M497 224.5h4M567 224.5h1M405 225.5h1M494 225.5h3M567 225.5h1M405 226.5h1M473 226.5h2M492 226.5h2M568 226.5h1M406 227.5h1M471 227.5h2M475 227.5h3M490 227.5h2M569 227.5h1M406 228.5h1M470 228.5h1M478 228.5h2M488 228.5h2M569 228.5h1M407 229.5h1M468 229.5h2M480 229.5h3M486 229.5h2M570 229.5h1M408 230.5h1M466 230.5h2M483 230.5h3M570 230.5h1M409 231.5h1M465 231.5h1M571 231.5h1M409 232.5h1M463 232.5h2M571 232.5h1M410 233.5h1M461 233.5h2M572 233.5h1M411 234.5h1M458 234.5h3M573 234.5h2M412 235.5h1M456 235.5h2M575 235.5h2M412 236.5h1M453 236.5h3M577 236.5h2M413 237.5h1M451 237.5h2M579 237.5h2M414 238.5h1M449 238.5h2M581 238.5h2M415 239.5h1M447 239.5h2M583 239.5h1M416 240.5h1M445 240.5h2M584 240.5h1M416 241.5h1M443 241.5h2M585 241.5h2M417 242.5h1M424 242.5h11M441 242.5h2M587 242.5h1M418 243.5h6M435 243.5h6M588 243.5h1M589 244.5h1M590 245.5h1M591 246.5h2M593 247.5h1M594 248.5h2M596 249.5h4M600 250.5h4M604 251.5h3M607 252.5h2M609 253.5h2M611 254.5h2M613 255.5h2M615 256.5h4M619 257.5h6M625 258.5h3M628 259.5h1M628 260.5h1M629 261.5h1M629 262.5h1M630 263.5h1M630 264.5h1M631 265.5h1M631 266.5h1M632 267.5h1M632 268.5h1M633 269.5h1M634 270.5h1M634 271.5h1M635 272.5h1M635 273.5h1M636 274.5h1M636 275.5h1M637 276.5h1M637 277.5h1M638 278.5h1M639 279.5h1M639 280.5h1M640 281.5h1M641 282.5h1M642 283.5h1M642 284.5h1M643 285.5h1M644 286.5h1M645 287.5h1M645 288.5h1M646 289.5h1M647 290.5h1M648 291.5h1M648 292.5h1M649 293.5h1M650 294.5h1M650 295.5h1M651 296.5h1M651 297.5h1M652 298.5h1M653 299.5h1M653 300.5h1M654 301.5h1M654 302.5h1M655 303.5h1M656 304.5h1M656 305.5h1M657 306.5h1M658 307.5h1M658 308.5h1M659 309.5h1M659 310.5h1M660 311.5h1M660 312.5h1M661 313.5h1M661 314.5h1M662 315.5h1M662 316.5h1M662 317.5h1M663 318.5h1M663 319.5h1M664 320.5h1M664 321.5h1M664 322.5h1M665 323.5h1M665 324.5h1M666 325.5h1M666 326.5h1M667 327.5h1M667 328.5h1M667 329.5h1M668 330.5h1M668 331.5h1M669 332.5h1M669 333.5h1M669 334.5h1M670 335.5h1M670 336.5h1M671 337.5h1M671 338.5h1M672 339.5h1M672 340.5h1M673 341.5h1M674 342.5h1M899 342.5h1M674 343.5h1M899 343.5h1M675 344.5h1M898 344.5h1M676 345.5h1M898 345.5h1M676 346.5h1M897 346.5h1M677 347.5h1M896 347.5h1M678 348.5h1M896 348.5h1M679 349.5h1M895 349.5h1M679 350.5h1M895 350.5h1M680 351.5h1M894 351.5h1M681 352.5h1M894 352.5h1M681 353.5h1M893 353.5h1M682 354.5h1M893 354.5h1M683 355.5h1M892 355.5h1M684 356.5h1M892 356.5h1M685 357.5h1M891 357.5h1M686 358.5h1M890 358.5h1M687 359.5h2M890 359.5h1M689 360.5h1M889 360.5h1M690 361.5h1M888 361.5h1M691 362.5h1M888 362.5h1M692 363.5h1M887 363.5h1M693 364.5h1M886 364.5h1M694 365.5h1M885 365.5h1M695 366.5h1M758 366.5h2M885 366.5h1M696 367.5h1M754 367.5h4M760 367.5h1M884 367.5h1M697 368.5h1M750 368.5h4M761 368.5h1M883 368.5h1M698 369.5h1M743 369.5h7M762 369.5h1M883 369.5h1M699 370.5h1M726 370.5h17M763 370.5h1M882 370.5h1M700 371.5h1M725 371.5h1M764 371.5h1M881 371.5h1M701 372.5h1M724 372.5h1M764 372.5h1M881 372.5h1M702 373.5h1M723 373.5h1M765 373.5h1M880 373.5h1M703 374.5h1M722 374.5h1M766 374.5h1M879 374.5h1M704 375.5h2M720 375.5h2M767 375.5h1M879 375.5h1M706 376.5h2M719 376.5h1M768 376.5h1M878 376.5h1M708 377.5h2M718 377.5h1M769 377.5h1M878 377.5h1M710 378.5h2M717 378.5h1M770 378.5h1M877 378.5h1M712 379.5h2M716 379.5h1M771 379.5h1M877 379.5h1M714 380.5h2M772 380.5h1M876 380.5h1M773 381.5h1M876 381.5h1M773 382.5h1M875 382.5h1M774 383.5h1M874 383.5h1M775 384.5h1M874 384.5h1M776 385.5h1M873 385.5h1M777 386.5h1M873 386.5h1M778 387.5h1M872 387.5h1M778 388.5h1M872 388.5h1M779 389.5h1M871 389.5h1M780 390.5h1M871 390.5h1M781 391.5h1M870 391.5h1M782 392.5h1M870 392.5h1M783 393.5h1M869 393.5h1M784 394.5h1M869 394.5h1M785 395.5h1M868 395.5h1M786 396.5h1M868 396.5h1M787 397.5h1M867 397.5h1M788 398.5h1M867 398.5h1M789 399.5h1M866 399.5h1M790 400.5h1M866 400.5h1M791 401.5h1M865 401.5h1M792 402.5h1M865 402.5h1M793 403.5h1M865 403.5h1M793 404.5h1M864 404.5h1M794 405.5h1M864 405.5h1M794 406.5h1M863 406.5h1M795 407.5h1M863 407.5h1M795 408.5h1M862 408.5h1M796 409.5h1M862 409.5h1M797 410.5h1M862 410.5h1M797 411.5h1M861 411.5h1M798 412.5h1M861 412.5h1M798 413.5h1M860 413.5h1M799 414.5h1M860 414.5h1M800 415.5h1M859 415.5h1M800 416.5h1M859 416.5h1M801 417.5h1M858 417.5h1M801 418.5h1M858 418.5h1M802 419.5h1M858 419.5h1M802 420.5h1M857 420.5h1M803 421.5h1M857 421.5h1M804 422.5h1M856 422.5h1M804 423.5h1M856 423.5h1M805 424.5h1M855 424.5h1M805 425.5h1M855 425.5h1M806 426.5h1M855 426.5h1M806 427.5h1M854 427.5h1M807 428.5h1M854 428.5h1M808 429.5h1M853 429.5h1M808 430.5h1M853 430.5h1M809 431.5h1M852 431.5h1M809 432.5h1M852 432.5h1M810 433.5h1M852 433.5h1M811 434.5h1M851 434.5h1M811 435.5h1M851 435.5h1M812 436.5h1M850 436.5h1M812 437.5h1M850 437.5h1M813 438.5h1M850 438.5h1M813 439.5h1M849 439.5h1M814 440.5h2M849 440.5h1M816 441.5h2M848 441.5h1M818 442.5h2M848 442.5h1M820 443.5h2M847 443.5h1M822 444.5h2M831 444.5h17M824 445.5h7" stroke="#f0f0f0" stroke-width="1" fill="none"/>
</g>
<g clip-path="url(#ck)" shape-rendering="crispEdges" stroke-width="1">
<path d="M517 532.5h1M518 533.5h1M518 534.5h1M519 535.5h1M520 536.5h1M99 537.5h1M520 537.5h1M880 537.5h6M99 538.5h1M521 538.5h1M886 538.5h5M100 539.5h1M522 539.5h1M51 540.5h1M100 540.5h1M522 540.5h1M51 541.5h1M100 541.5h1M523 541.5h1M52 542.5h1M100 542.5h1M523 542.5h1M53 543.5h1M101 543.5h1M524 543.5h1M54 544.5h1M101 544.5h1M525 544.5h1M54 545.5h1M101 545.5h1M525 545.5h1M55 546.5h1M101 546.5h1M526 546.5h1M56 547.5h2M102 547.5h1M527 547.5h1M58 548.5h2M102 548.5h1M527 548.5h1M60 549.5h2M102 549.5h1M528 549.5h1M62 550.5h2M102 550.5h1M253 550.5h1M529 550.5h2M64 551.5h2M103 551.5h1M254 551.5h1M531 551.5h1M103 552.5h1M254 552.5h1M532 552.5h1M103 553.5h1M255 553.5h1M533 553.5h2M103 554.5h1M256 554.5h1M535 554.5h1M104 555.5h1M256 555.5h1M536 555.5h1M104 556.5h1M257 556.5h1M537 556.5h2M104 557.5h1M258 557.5h1M539 557.5h1M104 558.5h1M258 558.5h1M539 558.5h1M99 559.5h1M105 559.5h1M259 559.5h1M539 559.5h1M100 560.5h1M105 560.5h1M260 560.5h1M540 560.5h1M100 561.5h1M105 561.5h1M261 561.5h1M540 561.5h1M101 562.5h1M105 562.5h1M261 562.5h1M540 562.5h1M102 563.5h1M106 563.5h1M262 563.5h1M540 563.5h1M103 564.5h1M106 564.5h1M263 564.5h1M541 564.5h1M103 565.5h1M106 565.5h1M263 565.5h1M541 565.5h1M104 566.5h1M106 566.5h1M264 566.5h3M541 566.5h1M105 567.5h1M107 567.5h1M267 567.5h6M541 567.5h1M106 568.5h2M273 568.5h3M541 568.5h1M106 569.5h2M276 569.5h1M542 569.5h1M99 570.5h6M107 570.5h1M276 570.5h1M542 570.5h1M105 571.5h7M277 571.5h1M542 571.5h1M108 572.5h2M112 572.5h3M278 572.5h1M542 572.5h1M108 573.5h2M115 573.5h2M278 573.5h1M517 573.5h3M543 573.5h1M108 574.5h1M110 574.5h1M117 574.5h3M279 574.5h1M520 574.5h6M543 574.5h1M109 575.5h1M111 575.5h1M120 575.5h2M280 575.5h1M473 575.5h1M526 575.5h2M539 575.5h1M543 575.5h1M109 576.5h1M112 576.5h1M122 576.5h2M280 576.5h1M474 576.5h1M540 576.5h1M543 576.5h1M51 577.5h4M109 577.5h1M113 577.5h1M124 577.5h2M253 577.5h2M281 577.5h1M475 577.5h1M540 577.5h1M543 577.5h1M109 578.5h1M114 578.5h1M126 578.5h2M255 578.5h4M282 578.5h1M476 578.5h1M541 578.5h1M544 578.5h1M110 579.5h1M115 579.5h2M128 579.5h2M259 579.5h4M275 579.5h1M283 579.5h1M477 579.5h1M542 579.5h1M544 579.5h1M110 580.5h1M117 580.5h1M130 580.5h2M263 580.5h1M276 580.5h2M283 580.5h1M478 580.5h1M542 580.5h1M544 580.5h1M111 581.5h1M118 581.5h1M132 581.5h2M278 581.5h2M284 581.5h1M479 581.5h1M543 581.5h2M759 581.5h1M111 582.5h1M119 582.5h1M134 582.5h2M280 582.5h2M285 582.5h1M480 582.5h1M544 582.5h2M759 582.5h1M112 583.5h1M120 583.5h1M136 583.5h2M282 583.5h2M285 583.5h1M481 583.5h1M539 583.5h2M544 583.5h2M759 583.5h1M113 584.5h1M121 584.5h1M138 584.5h2M284 584.5h3M482 584.5h1M541 584.5h5M760 584.5h1M113 585.5h1M122 585.5h1M140 585.5h2M286 585.5h1M483 585.5h1M545 585.5h4M760 585.5h1M114 586.5h1M123 586.5h2M142 586.5h3M286 586.5h2M546 586.5h1M549 586.5h2M760 586.5h1M115 587.5h1M125 587.5h1M145 587.5h3M287 587.5h3M546 587.5h2M551 587.5h1M760 587.5h1M115 588.5h1M126 588.5h1M148 588.5h2M287 588.5h1M290 588.5h1M546 588.5h2M552 588.5h2M760 588.5h1M116 589.5h1M127 589.5h1M150 589.5h3M287 589.5h2M291 589.5h1M546 589.5h1M548 589.5h1M554 589.5h1M761 589.5h1M116 590.5h1M128 590.5h1M153 590.5h7M287 590.5h2M292 590.5h1M546 590.5h1M549 590.5h1M555 590.5h1M761 590.5h1M117 591.5h1M129 591.5h2M160 591.5h8M287 591.5h1M289 591.5h1M293 591.5h1M547 591.5h1M549 591.5h1M556 591.5h1M761 591.5h1M118 592.5h1M131 592.5h1M168 592.5h6M287 592.5h1M289 592.5h1M294 592.5h2M547 592.5h1M550 592.5h1M557 592.5h1M761 592.5h1M118 593.5h1M132 593.5h2M165 593.5h2M174 593.5h4M288 593.5h2M296 593.5h1M547 593.5h1M550 593.5h1M558 593.5h2M761 593.5h1M119 594.5h1M134 594.5h3M166 594.5h3M178 594.5h2M288 594.5h1M290 594.5h1M297 594.5h1M547 594.5h1M551 594.5h1M560 594.5h1M762 594.5h1M120 595.5h1M137 595.5h2M167 595.5h4M180 595.5h2M288 595.5h1M290 595.5h1M298 595.5h2M548 595.5h1M551 595.5h1M561 595.5h1M762 595.5h1M120 596.5h1M139 596.5h3M169 596.5h1M171 596.5h2M182 596.5h2M288 596.5h1M291 596.5h1M300 596.5h1M548 596.5h1M552 596.5h1M562 596.5h1M762 596.5h1M121 597.5h1M142 597.5h4M170 597.5h1M173 597.5h2M184 597.5h2M288 597.5h1M291 597.5h1M301 597.5h1M548 597.5h1M552 597.5h1M563 597.5h1M762 597.5h1M122 598.5h1M146 598.5h6M171 598.5h1M175 598.5h2M186 598.5h7M288 598.5h1M291 598.5h1M302 598.5h2M548 598.5h1M553 598.5h1M564 598.5h1M762 598.5h1M122 599.5h1M152 599.5h2M172 599.5h1M177 599.5h2M193 599.5h8M289 599.5h1M292 599.5h1M304 599.5h1M548 599.5h1M553 599.5h1M564 599.5h1M763 599.5h1M123 600.5h1M173 600.5h2M179 600.5h1M201 600.5h6M289 600.5h1M292 600.5h1M305 600.5h1M549 600.5h1M554 600.5h1M565 600.5h1M737 600.5h3M763 600.5h1M123 601.5h1M175 601.5h1M180 601.5h1M207 601.5h5M289 601.5h1M293 601.5h1M306 601.5h2M549 601.5h1M554 601.5h1M566 601.5h1M740 601.5h6M763 601.5h1M124 602.5h1M176 602.5h1M181 602.5h2M212 602.5h6M289 602.5h1M293 602.5h1M308 602.5h1M549 602.5h1M555 602.5h1M567 602.5h1M746 602.5h2M763 602.5h1M125 603.5h1M176 603.5h1M183 603.5h1M198 603.5h6M218 603.5h8M289 603.5h1M294 603.5h1M309 603.5h1M549 603.5h1M555 603.5h1M568 603.5h1M763 603.5h1M125 604.5h1M177 604.5h1M184 604.5h1M204 604.5h7M226 604.5h5M290 604.5h1M294 604.5h1M310 604.5h1M550 604.5h1M555 604.5h1M569 604.5h1M764 604.5h1M126 605.5h1M177 605.5h1M185 605.5h2M211 605.5h4M290 605.5h1M294 605.5h1M311 605.5h1M550 605.5h1M556 605.5h1M569 605.5h1M764 605.5h1M126 606.5h1M178 606.5h1M215 606.5h4M290 606.5h1M295 606.5h1M312 606.5h1M550 606.5h1M556 606.5h1M570 606.5h1M764 606.5h1M127 607.5h1M178 607.5h1M219 607.5h12M290 607.5h1M295 607.5h1M313 607.5h2M550 607.5h1M557 607.5h1M571 607.5h1M764 607.5h1M128 608.5h1M179 608.5h1M290 608.5h1M296 608.5h1M315 608.5h1M550 608.5h1M557 608.5h1M572 608.5h2M759 608.5h1M764 608.5h1M128 609.5h1M179 609.5h1M290 609.5h1M296 609.5h1M316 609.5h1M551 609.5h1M558 609.5h1M574 609.5h2M760 609.5h1M765 609.5h1M129 610.5h1M180 610.5h1M291 610.5h1M297 610.5h1M317 610.5h1M551 610.5h1M558 610.5h1M576 610.5h2M760 610.5h1M765 610.5h1M130 611.5h1M180 611.5h1M198 611.5h13M291 611.5h1M297 611.5h1M318 611.5h1M551 611.5h1M559 611.5h1M578 611.5h2M761 611.5h1M765 611.5h1M130 612.5h1M181 612.5h1M211 612.5h3M291 612.5h1M298 612.5h1M319 612.5h1M551 612.5h1M559 612.5h1M580 612.5h2M761 612.5h1M765 612.5h1M131 613.5h1M181 613.5h1M214 613.5h2M291 613.5h1M299 613.5h2M320 613.5h1M552 613.5h1M560 613.5h1M582 613.5h3M762 613.5h1M766 613.5h1M131 614.5h1M182 614.5h1M216 614.5h3M291 614.5h1M301 614.5h1M321 614.5h1M552 614.5h1M560 614.5h1M585 614.5h3M762 614.5h1M766 614.5h1M132 615.5h2M182 615.5h1M219 615.5h1M291 615.5h1M302 615.5h1M322 615.5h1M552 615.5h1M561 615.5h1M588 615.5h2M763 615.5h1M766 615.5h1M134 616.5h2M183 616.5h1M292 616.5h1M303 616.5h1M323 616.5h1M552 616.5h1M561 616.5h1M590 616.5h3M763 616.5h1M766 616.5h1M136 617.5h2M183 617.5h1M292 617.5h1M304 617.5h1M324 617.5h2M552 617.5h1M562 617.5h1M593 617.5h7M764 617.5h1M766 617.5h1M138 618.5h2M184 618.5h1M292 618.5h1M305 618.5h2M326 618.5h1M553 618.5h1M562 618.5h1M600 618.5h7M764 618.5h1M767 618.5h1M140 619.5h2M184 619.5h1M292 619.5h1M307 619.5h1M327 619.5h1M553 619.5h1M563 619.5h1M607 619.5h2M765 619.5h1M767 619.5h1M142 620.5h1M185 620.5h1M292 620.5h1M308 620.5h1M328 620.5h1M553 620.5h1M564 620.5h1M609 620.5h2M765 620.5h1M767 620.5h1M185 621.5h1M293 621.5h1M309 621.5h1M329 621.5h1M553 621.5h1M564 621.5h1M605 621.5h1M611 621.5h2M766 621.5h2M186 622.5h1M293 622.5h1M310 622.5h1M330 622.5h1M554 622.5h1M565 622.5h1M606 622.5h1M613 622.5h2M759 622.5h6M766 622.5h2M186 623.5h1M293 623.5h1M311 623.5h1M331 623.5h2M554 623.5h1M566 623.5h1M607 623.5h1M615 623.5h3M765 623.5h6M293 624.5h1M312 624.5h1M333 624.5h1M554 624.5h1M566 624.5h1M608 624.5h1M618 624.5h2M767 624.5h2M771 624.5h2M293 625.5h1M313 625.5h1M334 625.5h1M554 625.5h1M567 625.5h1M609 625.5h1M620 625.5h2M768 625.5h1M773 625.5h1M293 626.5h1M314 626.5h1M335 626.5h2M554 626.5h1M567 626.5h1M605 626.5h1M610 626.5h1M622 626.5h2M768 626.5h1M774 626.5h2M294 627.5h1M315 627.5h1M337 627.5h1M555 627.5h1M568 627.5h1M605 627.5h1M610 627.5h1M624 627.5h2M768 627.5h2M776 627.5h2M294 628.5h1M316 628.5h1M338 628.5h1M555 628.5h1M569 628.5h1M606 628.5h1M611 628.5h1M626 628.5h2M769 628.5h1M778 628.5h1M294 629.5h1M317 629.5h1M339 629.5h2M555 629.5h1M569 629.5h1M606 629.5h1M612 629.5h1M628 629.5h2M769 629.5h2M779 629.5h2M294 630.5h1M318 630.5h1M341 630.5h2M555 630.5h1M570 630.5h1M607 630.5h1M613 630.5h1M630 630.5h1M769 630.5h1M771 630.5h1M781 630.5h1M294 631.5h1M319 631.5h1M343 631.5h4M555 631.5h1M571 631.5h1M607 631.5h1M614 631.5h1M631 631.5h2M769 631.5h1M772 631.5h1M782 631.5h2M295 632.5h1M320 632.5h1M347 632.5h4M556 632.5h1M571 632.5h1M608 632.5h1M615 632.5h1M633 632.5h2M769 632.5h1M772 632.5h1M784 632.5h1M295 633.5h1M321 633.5h1M351 633.5h3M556 633.5h1M608 633.5h1M616 633.5h1M635 633.5h1M770 633.5h1M773 633.5h1M785 633.5h2M295 634.5h1M322 634.5h1M354 634.5h3M556 634.5h1M609 634.5h1M617 634.5h2M636 634.5h2M770 634.5h1M774 634.5h1M787 634.5h2M295 635.5h1M323 635.5h1M357 635.5h2M556 635.5h1M609 635.5h1M619 635.5h1M638 635.5h2M770 635.5h1M775 635.5h1M789 635.5h1M295 636.5h1M324 636.5h1M359 636.5h3M557 636.5h1M609 636.5h1M620 636.5h1M640 636.5h3M770 636.5h1M775 636.5h1M790 636.5h2M295 637.5h1M325 637.5h1M362 637.5h3M557 637.5h1M610 637.5h1M621 637.5h2M643 637.5h2M771 637.5h1M776 637.5h1M792 637.5h1M296 638.5h1M326 638.5h1M352 638.5h1M365 638.5h3M557 638.5h1M610 638.5h1M623 638.5h1M645 638.5h3M771 638.5h1M777 638.5h1M793 638.5h2M296 639.5h1M327 639.5h1M353 639.5h2M368 639.5h2M557 639.5h1M611 639.5h1M624 639.5h1M648 639.5h4M772 639.5h1M778 639.5h1M795 639.5h2M296 640.5h1M328 640.5h1M355 640.5h1M370 640.5h3M557 640.5h1M611 640.5h1M625 640.5h2M652 640.5h6M772 640.5h1M779 640.5h1M797 640.5h2M296 641.5h1M329 641.5h1M356 641.5h1M373 641.5h3M558 641.5h1M612 641.5h1M627 641.5h1M658 641.5h4M772 641.5h1M779 641.5h1M799 641.5h2M296 642.5h1M330 642.5h2M357 642.5h2M376 642.5h2M558 642.5h1M612 642.5h1M628 642.5h1M662 642.5h3M773 642.5h1M780 642.5h1M801 642.5h2M296 643.5h1M332 643.5h2M359 643.5h1M378 643.5h2M558 643.5h1M612 643.5h1M629 643.5h2M665 643.5h2M773 643.5h1M781 643.5h1M803 643.5h2M297 644.5h1M334 644.5h2M360 644.5h1M380 644.5h2M558 644.5h1M613 644.5h1M631 644.5h1M667 644.5h3M774 644.5h1M782 644.5h2M805 644.5h4M297 645.5h1M336 645.5h2M361 645.5h2M382 645.5h2M559 645.5h1M613 645.5h1M632 645.5h1M660 645.5h1M670 645.5h4M774 645.5h1M784 645.5h1M809 645.5h4M297 646.5h1M338 646.5h2M363 646.5h3M384 646.5h3M559 646.5h1M614 646.5h1M633 646.5h1M661 646.5h2M674 646.5h6M774 646.5h1M785 646.5h1M813 646.5h7M298 647.5h1M340 647.5h1M366 647.5h6M387 647.5h3M559 647.5h1M614 647.5h1M634 647.5h1M663 647.5h1M680 647.5h13M775 647.5h1M786 647.5h2M820 647.5h5M299 648.5h2M372 648.5h3M390 648.5h2M559 648.5h1M615 648.5h1M635 648.5h2M664 648.5h1M775 648.5h1M788 648.5h1M301 649.5h1M352 649.5h1M375 649.5h2M392 649.5h3M559 649.5h1M615 649.5h1M637 649.5h1M665 649.5h2M775 649.5h1M789 649.5h1M302 650.5h1M353 650.5h1M377 650.5h1M395 650.5h3M560 650.5h1M616 650.5h1M667 650.5h1M776 650.5h1M790 650.5h2M303 651.5h1M354 651.5h1M378 651.5h1M398 651.5h4M560 651.5h1M616 651.5h1M668 651.5h1M776 651.5h1M792 651.5h2M304 652.5h1M354 652.5h1M379 652.5h2M402 652.5h4M560 652.5h1M617 652.5h1M669 652.5h2M777 652.5h1M794 652.5h3M305 653.5h2M355 653.5h1M381 653.5h1M406 653.5h3M560 653.5h1M618 653.5h1M777 653.5h1M797 653.5h2M307 654.5h1M356 654.5h1M382 654.5h1M409 654.5h4M561 654.5h1M619 654.5h1M777 654.5h1M799 654.5h3M308 655.5h1M357 655.5h1M383 655.5h2M413 655.5h4M561 655.5h1M619 655.5h1M660 655.5h1M778 655.5h1M802 655.5h1M309 656.5h1M357 656.5h1M385 656.5h2M417 656.5h1M561 656.5h1M620 656.5h1M661 656.5h1M778 656.5h1M310 657.5h1M358 657.5h1M387 657.5h4M561 657.5h1M621 657.5h1M661 657.5h1M779 657.5h1M310 658.5h1M359 658.5h1M391 658.5h4M407 658.5h2M562 658.5h1M622 658.5h1M662 658.5h1M779 658.5h1M311 659.5h1M360 659.5h1M395 659.5h1M409 659.5h4M562 659.5h1M623 659.5h1M663 659.5h1M779 659.5h1M312 660.5h1M361 660.5h1M413 660.5h4M563 660.5h1M624 660.5h1M664 660.5h1M780 660.5h1M313 661.5h1M361 661.5h1M417 661.5h1M563 661.5h1M624 661.5h1M664 661.5h1M780 661.5h1M313 662.5h1M362 662.5h1M563 662.5h1M625 662.5h1M665 662.5h1M781 662.5h1M314 663.5h1M363 663.5h3M564 663.5h1M626 663.5h1M666 663.5h1M781 663.5h1M315 664.5h1M366 664.5h6M564 664.5h1M627 664.5h1M667 664.5h1M782 664.5h1M316 665.5h1M372 665.5h3M565 665.5h1M628 665.5h1M667 665.5h1M783 665.5h1M317 666.5h1M375 666.5h1M565 666.5h1M629 666.5h1M668 666.5h1M784 666.5h1M317 667.5h1M376 667.5h1M565 667.5h1M629 667.5h1M669 667.5h1M784 667.5h1M318 668.5h1M377 668.5h1M566 668.5h1M630 668.5h1M670 668.5h1M785 668.5h1M319 669.5h1M378 669.5h1M407 669.5h2M566 669.5h1M631 669.5h1M670 669.5h1M786 669.5h1M320 670.5h1M379 670.5h1M409 670.5h4M567 670.5h1M632 670.5h1M787 670.5h1M321 671.5h1M380 671.5h1M413 671.5h4M567 671.5h1M632 671.5h1M788 671.5h1M322 672.5h1M381 672.5h1M417 672.5h1M568 672.5h1M633 672.5h1M789 672.5h1M322 673.5h1M382 673.5h1M568 673.5h1M634 673.5h1M789 673.5h1M323 674.5h1M383 674.5h1M568 674.5h1M635 674.5h1M790 674.5h1M324 675.5h1M384 675.5h1M569 675.5h1M636 675.5h1M791 675.5h1M325 676.5h1M385 676.5h6M569 676.5h1M636 676.5h1M792 676.5h2M326 677.5h1M391 677.5h5M570 677.5h1M637 677.5h1M794 677.5h2M327 678.5h1M570 678.5h1M796 678.5h2M327 679.5h1M570 679.5h1M798 679.5h2M328 680.5h1M571 680.5h1M800 680.5h2M329 681.5h1M571 681.5h1M802 681.5h1" stroke="#00e800" stroke-width="1" fill="none"/>
<path d="M516 533.5h1M516 534.5h1M515 535.5h1M515 536.5h1M98 537.5h1M514 537.5h1M878 537.5h2M96 538.5h2M514 538.5h1M872 538.5h6M891 538.5h9M94 539.5h2M513 539.5h1M869 539.5h3M92 540.5h2M513 540.5h1M869 540.5h1M90 541.5h2M512 541.5h1M868 541.5h1M87 542.5h3M512 542.5h1M868 542.5h1M85 543.5h2M511 543.5h1M867 543.5h1M83 544.5h2M511 544.5h1M867 544.5h1M81 545.5h2M510 545.5h1M866 545.5h1M79 546.5h2M510 546.5h1M866 546.5h1M76 547.5h3M509 547.5h1M865 547.5h1M74 548.5h2M509 548.5h1M865 548.5h1M72 549.5h2M508 549.5h1M864 549.5h1M70 550.5h2M508 550.5h1M864 550.5h1M68 551.5h2M252 551.5h1M507 551.5h1M863 551.5h1M66 552.5h2M251 552.5h1M507 552.5h1M863 552.5h1M250 553.5h1M506 553.5h1M862 553.5h1M250 554.5h1M505 554.5h1M862 554.5h1M249 555.5h1M505 555.5h1M861 555.5h1M248 556.5h1M504 556.5h1M861 556.5h1M247 557.5h1M504 557.5h1M860 557.5h1M246 558.5h1M503 558.5h1M860 558.5h1M98 559.5h1M245 559.5h1M503 559.5h1M859 559.5h1M96 560.5h2M245 560.5h1M502 560.5h1M859 560.5h1M94 561.5h2M244 561.5h1M501 561.5h1M858 561.5h1M92 562.5h2M243 562.5h1M501 562.5h1M858 562.5h1M90 563.5h2M242 563.5h1M500 563.5h1M858 563.5h1M88 564.5h2M242 564.5h1M500 564.5h1M858 564.5h1M86 565.5h2M242 565.5h1M499 565.5h1M857 565.5h1M84 566.5h2M241 566.5h1M498 566.5h1M857 566.5h1M82 567.5h2M241 567.5h1M498 567.5h1M857 567.5h1M80 568.5h2M241 568.5h1M497 568.5h1M857 568.5h1M78 569.5h2M241 569.5h1M497 569.5h1M857 569.5h1M76 570.5h2M240 570.5h1M496 570.5h1M856 570.5h1M74 571.5h2M97 571.5h2M240 571.5h1M496 571.5h1M856 571.5h1M72 572.5h2M95 572.5h2M240 572.5h1M495 572.5h1M856 572.5h1M899 572.5h1M70 573.5h2M93 573.5h2M240 573.5h1M494 573.5h1M856 573.5h1M897 573.5h2M68 574.5h2M91 574.5h2M240 574.5h1M493 574.5h1M516 574.5h1M856 574.5h1M895 574.5h2M64 575.5h4M89 575.5h2M239 575.5h1M468 575.5h5M493 575.5h1M515 575.5h1M528 575.5h11M855 575.5h1M893 575.5h2M58 576.5h6M87 576.5h2M239 576.5h1M462 576.5h6M492 576.5h1M515 576.5h1M855 576.5h1M891 576.5h2M55 577.5h3M85 577.5h2M239 577.5h1M462 577.5h1M491 577.5h1M514 577.5h1M855 577.5h1M889 577.5h2M83 578.5h2M239 578.5h1M252 578.5h1M461 578.5h1M490 578.5h1M513 578.5h1M855 578.5h1M887 578.5h2M81 579.5h2M238 579.5h1M251 579.5h1M270 579.5h5M461 579.5h1M489 579.5h1M512 579.5h1M854 579.5h1M885 579.5h2M79 580.5h2M238 580.5h1M250 580.5h1M264 580.5h6M461 580.5h1M489 580.5h1M511 580.5h1M854 580.5h1M883 580.5h2M77 581.5h2M238 581.5h1M249 581.5h1M460 581.5h1M488 581.5h1M511 581.5h1M854 581.5h1M881 581.5h2M75 582.5h2M238 582.5h1M247 582.5h2M460 582.5h1M487 582.5h1M510 582.5h1M758 582.5h1M854 582.5h1M880 582.5h1M73 583.5h2M238 583.5h1M246 583.5h1M460 583.5h1M486 583.5h1M509 583.5h1M538 583.5h1M758 583.5h1M854 583.5h1M878 583.5h2M71 584.5h2M237 584.5h1M245 584.5h1M459 584.5h1M486 584.5h1M508 584.5h1M536 584.5h2M757 584.5h1M853 584.5h1M877 584.5h1M69 585.5h2M237 585.5h1M244 585.5h1M274 585.5h12M459 585.5h1M485 585.5h1M508 585.5h1M534 585.5h2M757 585.5h1M853 585.5h1M876 585.5h1M67 586.5h2M237 586.5h1M243 586.5h1M270 586.5h4M458 586.5h1M484 586.5h1M507 586.5h1M532 586.5h2M756 586.5h1M853 586.5h1M874 586.5h2M66 587.5h1M237 587.5h1M242 587.5h1M266 587.5h4M458 587.5h1M506 587.5h1M530 587.5h2M756 587.5h1M853 587.5h1M873 587.5h1M64 588.5h2M236 588.5h1M241 588.5h1M263 588.5h3M458 588.5h1M505 588.5h1M527 588.5h3M755 588.5h1M853 588.5h1M872 588.5h1M62 589.5h2M236 589.5h1M241 589.5h1M259 589.5h4M457 589.5h1M504 589.5h1M525 589.5h2M755 589.5h1M852 589.5h1M870 589.5h2M899 589.5h1M60 590.5h2M236 590.5h1M240 590.5h1M255 590.5h4M457 590.5h1M503 590.5h1M523 590.5h2M754 590.5h1M852 590.5h1M869 590.5h1M898 590.5h1M58 591.5h2M236 591.5h1M240 591.5h1M253 591.5h2M457 591.5h1M502 591.5h1M521 591.5h2M754 591.5h1M852 591.5h1M868 591.5h1M896 591.5h2M56 592.5h2M235 592.5h1M239 592.5h1M251 592.5h2M456 592.5h1M501 592.5h1M519 592.5h2M753 592.5h1M852 592.5h1M868 592.5h1M895 592.5h1M54 593.5h2M235 593.5h1M239 593.5h1M250 593.5h1M456 593.5h1M500 593.5h1M517 593.5h2M753 593.5h1M852 593.5h1M867 593.5h1M894 593.5h1M52 594.5h2M163 594.5h2M235 594.5h1M238 594.5h1M248 594.5h2M456 594.5h1M500 594.5h1M516 594.5h1M752 594.5h1M851 594.5h1M866 594.5h1M892 594.5h2M51 595.5h1M161 595.5h2M164 595.5h1M235 595.5h1M238 595.5h1M246 595.5h2M455 595.5h1M499 595.5h1M515 595.5h1M752 595.5h1M851 595.5h1M865 595.5h1M891 595.5h1M159 596.5h2M163 596.5h1M235 596.5h1M237 596.5h1M245 596.5h1M455 596.5h1M498 596.5h1M514 596.5h1M751 596.5h1M851 596.5h1M865 596.5h1M890 596.5h1M157 597.5h2M163 597.5h1M234 597.5h1M236 597.5h1M243 597.5h2M455 597.5h1M497 597.5h1M513 597.5h1M751 597.5h1M851 597.5h1M864 597.5h1M888 597.5h2M155 598.5h2M162 598.5h1M234 598.5h1M236 598.5h1M242 598.5h1M454 598.5h1M496 598.5h1M512 598.5h1M750 598.5h1M851 598.5h1M863 598.5h1M887 598.5h1M154 599.5h1M162 599.5h1M234 599.5h2M240 599.5h2M454 599.5h1M495 599.5h1M511 599.5h1M750 599.5h1M850 599.5h1M862 599.5h1M886 599.5h1M161 600.5h1M234 600.5h2M238 600.5h2M453 600.5h1M494 600.5h1M510 600.5h1M749 600.5h1M850 600.5h1M862 600.5h1M885 600.5h1M161 601.5h1M233 601.5h2M236 601.5h2M453 601.5h1M492 601.5h2M509 601.5h1M736 601.5h1M749 601.5h1M850 601.5h1M861 601.5h1M884 601.5h1M160 602.5h1M233 602.5h3M453 602.5h1M491 602.5h1M508 602.5h1M735 602.5h1M748 602.5h1M850 602.5h1M860 602.5h1M882 602.5h2M160 603.5h1M197 603.5h1M232 603.5h2M452 603.5h1M490 603.5h1M507 603.5h1M734 603.5h1M849 603.5h1M859 603.5h1M881 603.5h1M159 604.5h1M193 604.5h4M231 604.5h1M233 604.5h1M452 604.5h1M489 604.5h1M506 604.5h1M733 604.5h1M849 604.5h1M859 604.5h1M880 604.5h1M159 605.5h1M189 605.5h4M232 605.5h2M452 605.5h1M488 605.5h1M505 605.5h1M731 605.5h2M849 605.5h1M858 605.5h1M879 605.5h1M158 606.5h1M187 606.5h2M232 606.5h1M451 606.5h1M486 606.5h2M503 606.5h2M730 606.5h1M849 606.5h1M858 606.5h1M878 606.5h1M158 607.5h1M231 607.5h2M451 607.5h1M485 607.5h1M502 607.5h1M729 607.5h1M849 607.5h1M857 607.5h1M877 607.5h1M157 608.5h1M232 608.5h1M451 608.5h1M479 608.5h6M501 608.5h1M728 608.5h1M848 608.5h1M857 608.5h1M876 608.5h1M157 609.5h1M232 609.5h1M450 609.5h1M473 609.5h6M500 609.5h1M727 609.5h1M758 609.5h1M848 609.5h1M856 609.5h1M875 609.5h1M156 610.5h1M231 610.5h1M450 610.5h1M471 610.5h2M499 610.5h1M726 610.5h1M757 610.5h1M848 610.5h1M856 610.5h1M874 610.5h1M156 611.5h1M231 611.5h1M449 611.5h1M469 611.5h2M497 611.5h2M725 611.5h1M756 611.5h1M848 611.5h1M855 611.5h1M874 611.5h1M155 612.5h1M197 612.5h1M230 612.5h2M449 612.5h1M467 612.5h2M496 612.5h1M724 612.5h1M755 612.5h1M848 612.5h1M855 612.5h1M873 612.5h1M155 613.5h1M196 613.5h1M226 613.5h4M448 613.5h1M465 613.5h2M495 613.5h1M723 613.5h1M754 613.5h1M847 613.5h1M854 613.5h1M872 613.5h1M154 614.5h1M195 614.5h1M222 614.5h4M448 614.5h1M463 614.5h2M493 614.5h2M722 614.5h1M753 614.5h1M847 614.5h1M854 614.5h1M871 614.5h1M153 615.5h2M195 615.5h1M220 615.5h2M447 615.5h1M462 615.5h1M492 615.5h1M721 615.5h1M753 615.5h1M847 615.5h1M854 615.5h1M870 615.5h1M151 616.5h2M194 616.5h1M447 616.5h1M461 616.5h1M490 616.5h2M720 616.5h1M752 616.5h1M845 616.5h2M853 616.5h1M869 616.5h1M149 617.5h2M193 617.5h1M446 617.5h1M461 617.5h1M488 617.5h2M719 617.5h1M751 617.5h1M843 617.5h2M853 617.5h1M868 617.5h1M147 618.5h2M192 618.5h1M446 618.5h1M460 618.5h1M487 618.5h1M718 618.5h1M750 618.5h1M841 618.5h2M852 618.5h1M867 618.5h1M145 619.5h2M191 619.5h1M445 619.5h1M459 619.5h1M485 619.5h2M717 619.5h1M749 619.5h1M839 619.5h2M852 619.5h1M866 619.5h1M143 620.5h2M190 620.5h1M445 620.5h1M458 620.5h1M484 620.5h1M716 620.5h1M746 620.5h3M837 620.5h2M851 620.5h1M865 620.5h1M190 621.5h1M445 621.5h1M458 621.5h1M482 621.5h2M603 621.5h2M715 621.5h1M740 621.5h6M836 621.5h1M851 621.5h1M864 621.5h1M189 622.5h1M444 622.5h1M457 622.5h1M480 622.5h2M597 622.5h6M715 622.5h1M737 622.5h3M836 622.5h1M851 622.5h1M863 622.5h1M188 623.5h1M444 623.5h1M456 623.5h1M478 623.5h2M589 623.5h8M714 623.5h1M735 623.5h2M757 623.5h2M835 623.5h1M850 623.5h1M863 623.5h1M187 624.5h1M443 624.5h1M455 624.5h1M476 624.5h2M583 624.5h6M714 624.5h1M733 624.5h2M756 624.5h1M835 624.5h1M850 624.5h1M862 624.5h1M443 625.5h1M455 625.5h1M474 625.5h2M582 625.5h1M713 625.5h1M731 625.5h2M754 625.5h2M834 625.5h1M849 625.5h1M861 625.5h1M442 626.5h1M454 626.5h1M473 626.5h1M580 626.5h2M713 626.5h1M729 626.5h2M752 626.5h2M834 626.5h1M849 626.5h1M860 626.5h1M442 627.5h1M453 627.5h1M472 627.5h1M579 627.5h1M604 627.5h1M712 627.5h1M727 627.5h2M751 627.5h1M833 627.5h1M848 627.5h1M859 627.5h1M441 628.5h1M452 628.5h1M470 628.5h2M578 628.5h1M603 628.5h1M712 628.5h1M726 628.5h1M749 628.5h2M833 628.5h1M848 628.5h1M858 628.5h1M441 629.5h1M452 629.5h1M469 629.5h1M577 629.5h1M602 629.5h1M711 629.5h1M724 629.5h2M747 629.5h2M833 629.5h1M847 629.5h1M857 629.5h1M440 630.5h1M451 630.5h1M468 630.5h1M576 630.5h1M601 630.5h1M711 630.5h1M723 630.5h1M744 630.5h3M832 630.5h1M847 630.5h1M856 630.5h1M439 631.5h2M450 631.5h1M467 631.5h1M574 631.5h2M599 631.5h2M710 631.5h1M722 631.5h1M742 631.5h2M832 631.5h1M845 631.5h2M855 631.5h1M435 632.5h4M449 632.5h1M466 632.5h1M573 632.5h1M598 632.5h1M710 632.5h1M720 632.5h2M739 632.5h3M831 632.5h1M843 632.5h2M854 632.5h1M431 633.5h4M448 633.5h1M464 633.5h2M572 633.5h1M597 633.5h1M709 633.5h1M719 633.5h1M736 633.5h3M831 633.5h1M841 633.5h2M853 633.5h1M429 634.5h2M448 634.5h1M463 634.5h1M596 634.5h1M709 634.5h1M718 634.5h1M734 634.5h2M830 634.5h1M839 634.5h2M852 634.5h1M429 635.5h1M447 635.5h1M462 635.5h1M595 635.5h1M709 635.5h1M716 635.5h2M732 635.5h2M830 635.5h1M837 635.5h2M852 635.5h1M428 636.5h1M446 636.5h1M461 636.5h1M594 636.5h1M708 636.5h1M715 636.5h1M730 636.5h2M830 636.5h1M836 636.5h1M851 636.5h1M428 637.5h1M445 637.5h1M459 637.5h2M593 637.5h1M708 637.5h1M714 637.5h1M728 637.5h2M829 637.5h1M835 637.5h1M850 637.5h1M428 638.5h1M444 638.5h1M458 638.5h1M591 638.5h2M707 638.5h1M713 638.5h1M725 638.5h3M829 638.5h1M834 638.5h1M849 638.5h1M351 639.5h1M428 639.5h1M443 639.5h1M457 639.5h1M590 639.5h1M707 639.5h1M712 639.5h1M722 639.5h3M828 639.5h1M833 639.5h1M848 639.5h1M349 640.5h2M427 640.5h1M443 640.5h1M456 640.5h1M589 640.5h1M706 640.5h1M711 640.5h1M720 640.5h2M828 640.5h1M832 640.5h1M846 640.5h2M348 641.5h1M427 641.5h1M442 641.5h1M455 641.5h1M588 641.5h1M706 641.5h1M709 641.5h2M717 641.5h3M828 641.5h1M831 641.5h1M842 641.5h4M347 642.5h1M427 642.5h1M441 642.5h1M453 642.5h2M587 642.5h1M705 642.5h1M708 642.5h1M714 642.5h3M827 642.5h1M830 642.5h1M838 642.5h4M346 643.5h1M426 643.5h1M439 643.5h2M452 643.5h1M585 643.5h2M705 643.5h1M707 643.5h1M712 643.5h2M827 643.5h1M829 643.5h1M835 643.5h3M345 644.5h1M426 644.5h1M435 644.5h4M451 644.5h1M584 644.5h1M704 644.5h1M706 644.5h1M710 644.5h2M826 644.5h1M828 644.5h1M832 644.5h3M343 645.5h2M426 645.5h1M431 645.5h4M449 645.5h2M583 645.5h1M655 645.5h5M703 645.5h3M708 645.5h2M826 645.5h2M830 645.5h2M342 646.5h1M426 646.5h1M429 646.5h2M447 646.5h2M583 646.5h1M648 646.5h7M700 646.5h5M706 646.5h2M825 646.5h5M341 647.5h1M425 647.5h1M428 647.5h1M445 647.5h2M582 647.5h1M645 647.5h3M693 647.5h13M825 647.5h2M425 648.5h1M428 648.5h1M443 648.5h2M582 648.5h1M643 648.5h2M691 648.5h7M823 648.5h2M425 649.5h1M427 649.5h1M441 649.5h2M582 649.5h1M640 649.5h3M685 649.5h6M693 649.5h2M821 649.5h2M824 649.5h1M352 650.5h1M424 650.5h1M426 650.5h1M439 650.5h2M582 650.5h1M638 650.5h2M681 650.5h4M691 650.5h2M819 650.5h2M823 650.5h1M351 651.5h1M424 651.5h2M435 651.5h4M581 651.5h1M677 651.5h4M689 651.5h2M817 651.5h2M823 651.5h1M351 652.5h1M424 652.5h2M431 652.5h4M581 652.5h1M673 652.5h4M687 652.5h2M815 652.5h2M822 652.5h1M351 653.5h1M423 653.5h2M428 653.5h3M581 653.5h1M671 653.5h2M685 653.5h2M812 653.5h3M822 653.5h1M350 654.5h1M423 654.5h5M580 654.5h1M683 654.5h2M806 654.5h6M821 654.5h1M350 655.5h1M420 655.5h4M580 655.5h1M659 655.5h1M682 655.5h1M803 655.5h3M821 655.5h1M350 656.5h1M418 656.5h2M422 656.5h2M580 656.5h1M657 656.5h2M681 656.5h1M820 656.5h1M349 657.5h1M421 657.5h2M580 657.5h1M655 657.5h2M681 657.5h1M820 657.5h1M349 658.5h1M402 658.5h5M420 658.5h1M422 658.5h1M579 658.5h1M653 658.5h2M680 658.5h1M819 658.5h1M348 659.5h1M396 659.5h6M419 659.5h1M422 659.5h1M579 659.5h1M651 659.5h2M679 659.5h1M819 659.5h1M348 660.5h1M419 660.5h1M421 660.5h1M579 660.5h1M649 660.5h2M678 660.5h1M818 660.5h1M348 661.5h1M418 661.5h1M421 661.5h1M578 661.5h1M648 661.5h1M678 661.5h1M818 661.5h1M347 662.5h1M421 662.5h1M578 662.5h1M648 662.5h1M677 662.5h1M817 662.5h1M347 663.5h1M421 663.5h1M578 663.5h1M647 663.5h1M676 663.5h1M817 663.5h1M347 664.5h1M420 664.5h1M577 664.5h1M647 664.5h1M675 664.5h1M816 664.5h1M346 665.5h1M420 665.5h1M577 665.5h1M646 665.5h1M675 665.5h1M816 665.5h1M346 666.5h1M420 666.5h1M577 666.5h1M645 666.5h1M674 666.5h1M815 666.5h1M346 667.5h1M419 667.5h1M577 667.5h1M645 667.5h1M673 667.5h1M815 667.5h1M345 668.5h1M419 668.5h1M576 668.5h1M644 668.5h1M672 668.5h1M814 668.5h1M345 669.5h1M419 669.5h1M576 669.5h1M643 669.5h1M672 669.5h1M813 669.5h1M345 670.5h1M405 670.5h2M419 670.5h1M576 670.5h1M643 670.5h1M671 670.5h1M812 670.5h1M344 671.5h1M404 671.5h1M418 671.5h1M575 671.5h1M642 671.5h1M811 671.5h1M344 672.5h1M403 672.5h1M418 672.5h1M575 672.5h1M642 672.5h1M811 672.5h1M343 673.5h1M401 673.5h2M575 673.5h1M641 673.5h1M810 673.5h1M343 674.5h1M400 674.5h1M575 674.5h1M640 674.5h1M809 674.5h1M343 675.5h1M399 675.5h1M574 675.5h1M640 675.5h1M808 675.5h1M342 676.5h1M397 676.5h2M574 676.5h1M639 676.5h1M807 676.5h1M342 677.5h1M396 677.5h1M574 677.5h1M639 677.5h1M806 677.5h1M342 678.5h1M573 678.5h1M638 678.5h1M806 678.5h1M341 679.5h1M573 679.5h1M805 679.5h1M339 680.5h3M573 680.5h1M804 680.5h1M333 681.5h6M573 681.5h1M803 681.5h1M330 682.5h3M572 682.5h1M572 683.5h1" stroke="#f00000" stroke-width="1" fill="none"/>
</g>
<g fill="#c8c8c8" shape-rendering="crispEdges"><rect x="4" y="10" width="7" height="1"/><rect x="4" y="14" width="7" height="1"/><rect x="4" y="10" width="1" height="5"/><rect x="13" y="10" width="7" height="1"/><rect x="13" y="14" width="7" height="1"/><rect x="19" y="10" width="1" height="5"/><rect x="9" y="12" width="6" height="1"/></g>
<text x="25" y="16.5" font-size="12" fill="#ffffff" text-anchor="start" font-weight="normal" style="font-family:'Liberation Sans','Noto Serif CJK SC',serif" textLength="24" lengthAdjust="spacing">热卷</text>
<text x="49" y="16.5" font-size="13" fill="#ffffff" text-anchor="start" font-weight="normal" style="font-family:'Liberation Mono','Noto Serif CJK SC',monospace" textLength="114" lengthAdjust="spacingAndGlyphs">1701(SHME hc1701)15</text>
<text x="163" y="16.5" font-size="12" fill="#ffffff" text-anchor="start" font-weight="normal" style="font-family:'Liberation Sans','Noto Serif CJK SC',serif" textLength="24" lengthAdjust="spacing">分钟</text>
<text x="55.5" y="34" font-size="12.4" fill="#e6e600" text-anchor="start" font-weight="normal" textLength="140.5" lengthAdjust="spacing">MA组合(5,10,20,40,60,0)</text>
<text x="204.5" y="34" font-size="12.4" fill="#f0f0f0" text-anchor="start" font-weight="normal" textLength="73" lengthAdjust="spacing">MA5 2693.60</text>
<text x="297" y="34" font-size="12.4" fill="#e6e600" text-anchor="start" font-weight="normal" textLength="79.5" lengthAdjust="spacing">MA10 2686.20</text>
<text x="395.5" y="34" font-size="12.4" fill="#ff00ff" text-anchor="start" font-weight="normal" textLength="80" lengthAdjust="spacing">MA20 2677.55</text>
<text x="494.5" y="34" font-size="12.4" fill="#00ee00" text-anchor="start" font-weight="normal" textLength="80" lengthAdjust="spacing">MA40 2666.05</text>
<text x="593.5" y="34" font-size="12.4" fill="#808080" text-anchor="start" font-weight="normal" textLength="80.5" lengthAdjust="spacing">MA60 2652.15</text>
<text x="194.7" y="51" font-size="12.4" fill="#ff3c3c" text-anchor="start" font-weight="normal" textLength="27.3" lengthAdjust="spacing">2738</text>
<g fill="#ff3c3c" shape-rendering="crispEdges"><path d="M229 45.5H252" stroke="#ff3c3c" stroke-dasharray="3,1" fill="none"/><rect x="224" y="45" width="3" height="1"/><rect x="225" y="44" width="1" height="3" opacity="0.8"/><rect x="227" y="43" width="1" height="1"/><rect x="228" y="42" width="2" height="1"/><rect x="227" y="47" width="1" height="1"/><rect x="228" y="48" width="2" height="1"/></g>
<text x="412" y="302" font-size="12.4" fill="#00f0f0" text-anchor="start" font-weight="normal" textLength="27.4" lengthAdjust="spacing">2657</text>
<text x="786.3" y="493" font-size="12.4" fill="#00f0f0" text-anchor="start" font-weight="normal" textLength="27.4" lengthAdjust="spacing">2595</text>
<text x="52" y="167" font-size="12.4" fill="#00f0f0" text-anchor="start" font-weight="normal" textLength="12.7" lengthAdjust="spacing">01</text>
<text x="52" y="491.5" font-size="12" fill="#e6e600" text-anchor="start" font-weight="normal" textLength="17" lengthAdjust="spacing">6天</text>
<text x="54.5" y="510.5" font-size="12.4" fill="#e6e600" text-anchor="start" font-weight="normal" textLength="44.5" lengthAdjust="spacing">变色KDJ</text>
<text x="47.7" y="161" font-size="12.4" fill="#9c9c9c" text-anchor="end" font-weight="normal" textLength="27.4" lengthAdjust="spacing">2700</text>
<text x="47.7" y="468" font-size="12.4" fill="#9c9c9c" text-anchor="end" font-weight="normal" textLength="27.4" lengthAdjust="spacing">2600</text>
<text x="47.3" y="542" font-size="12.3" fill="#9c9c9c" text-anchor="end" font-weight="normal" stroke="#9c9c9c" stroke-width="0.45">100</text>
<text x="47.3" y="569" font-size="12.3" fill="#9c9c9c" text-anchor="end" font-weight="normal" stroke="#9c9c9c" stroke-width="0.45">80</text>
<text x="47.3" y="609" font-size="12.3" fill="#9c9c9c" text-anchor="end" font-weight="normal" stroke="#9c9c9c" stroke-width="0.45">50</text>
<text x="47.3" y="650" font-size="12.3" fill="#9c9c9c" text-anchor="end" font-weight="normal" stroke="#9c9c9c" stroke-width="0.45">20</text>
<text x="47.3" y="677" font-size="12.3" fill="#9c9c9c" text-anchor="end" font-weight="normal" stroke="#9c9c9c" stroke-width="0.45">0</text>
</svg></body></html>
